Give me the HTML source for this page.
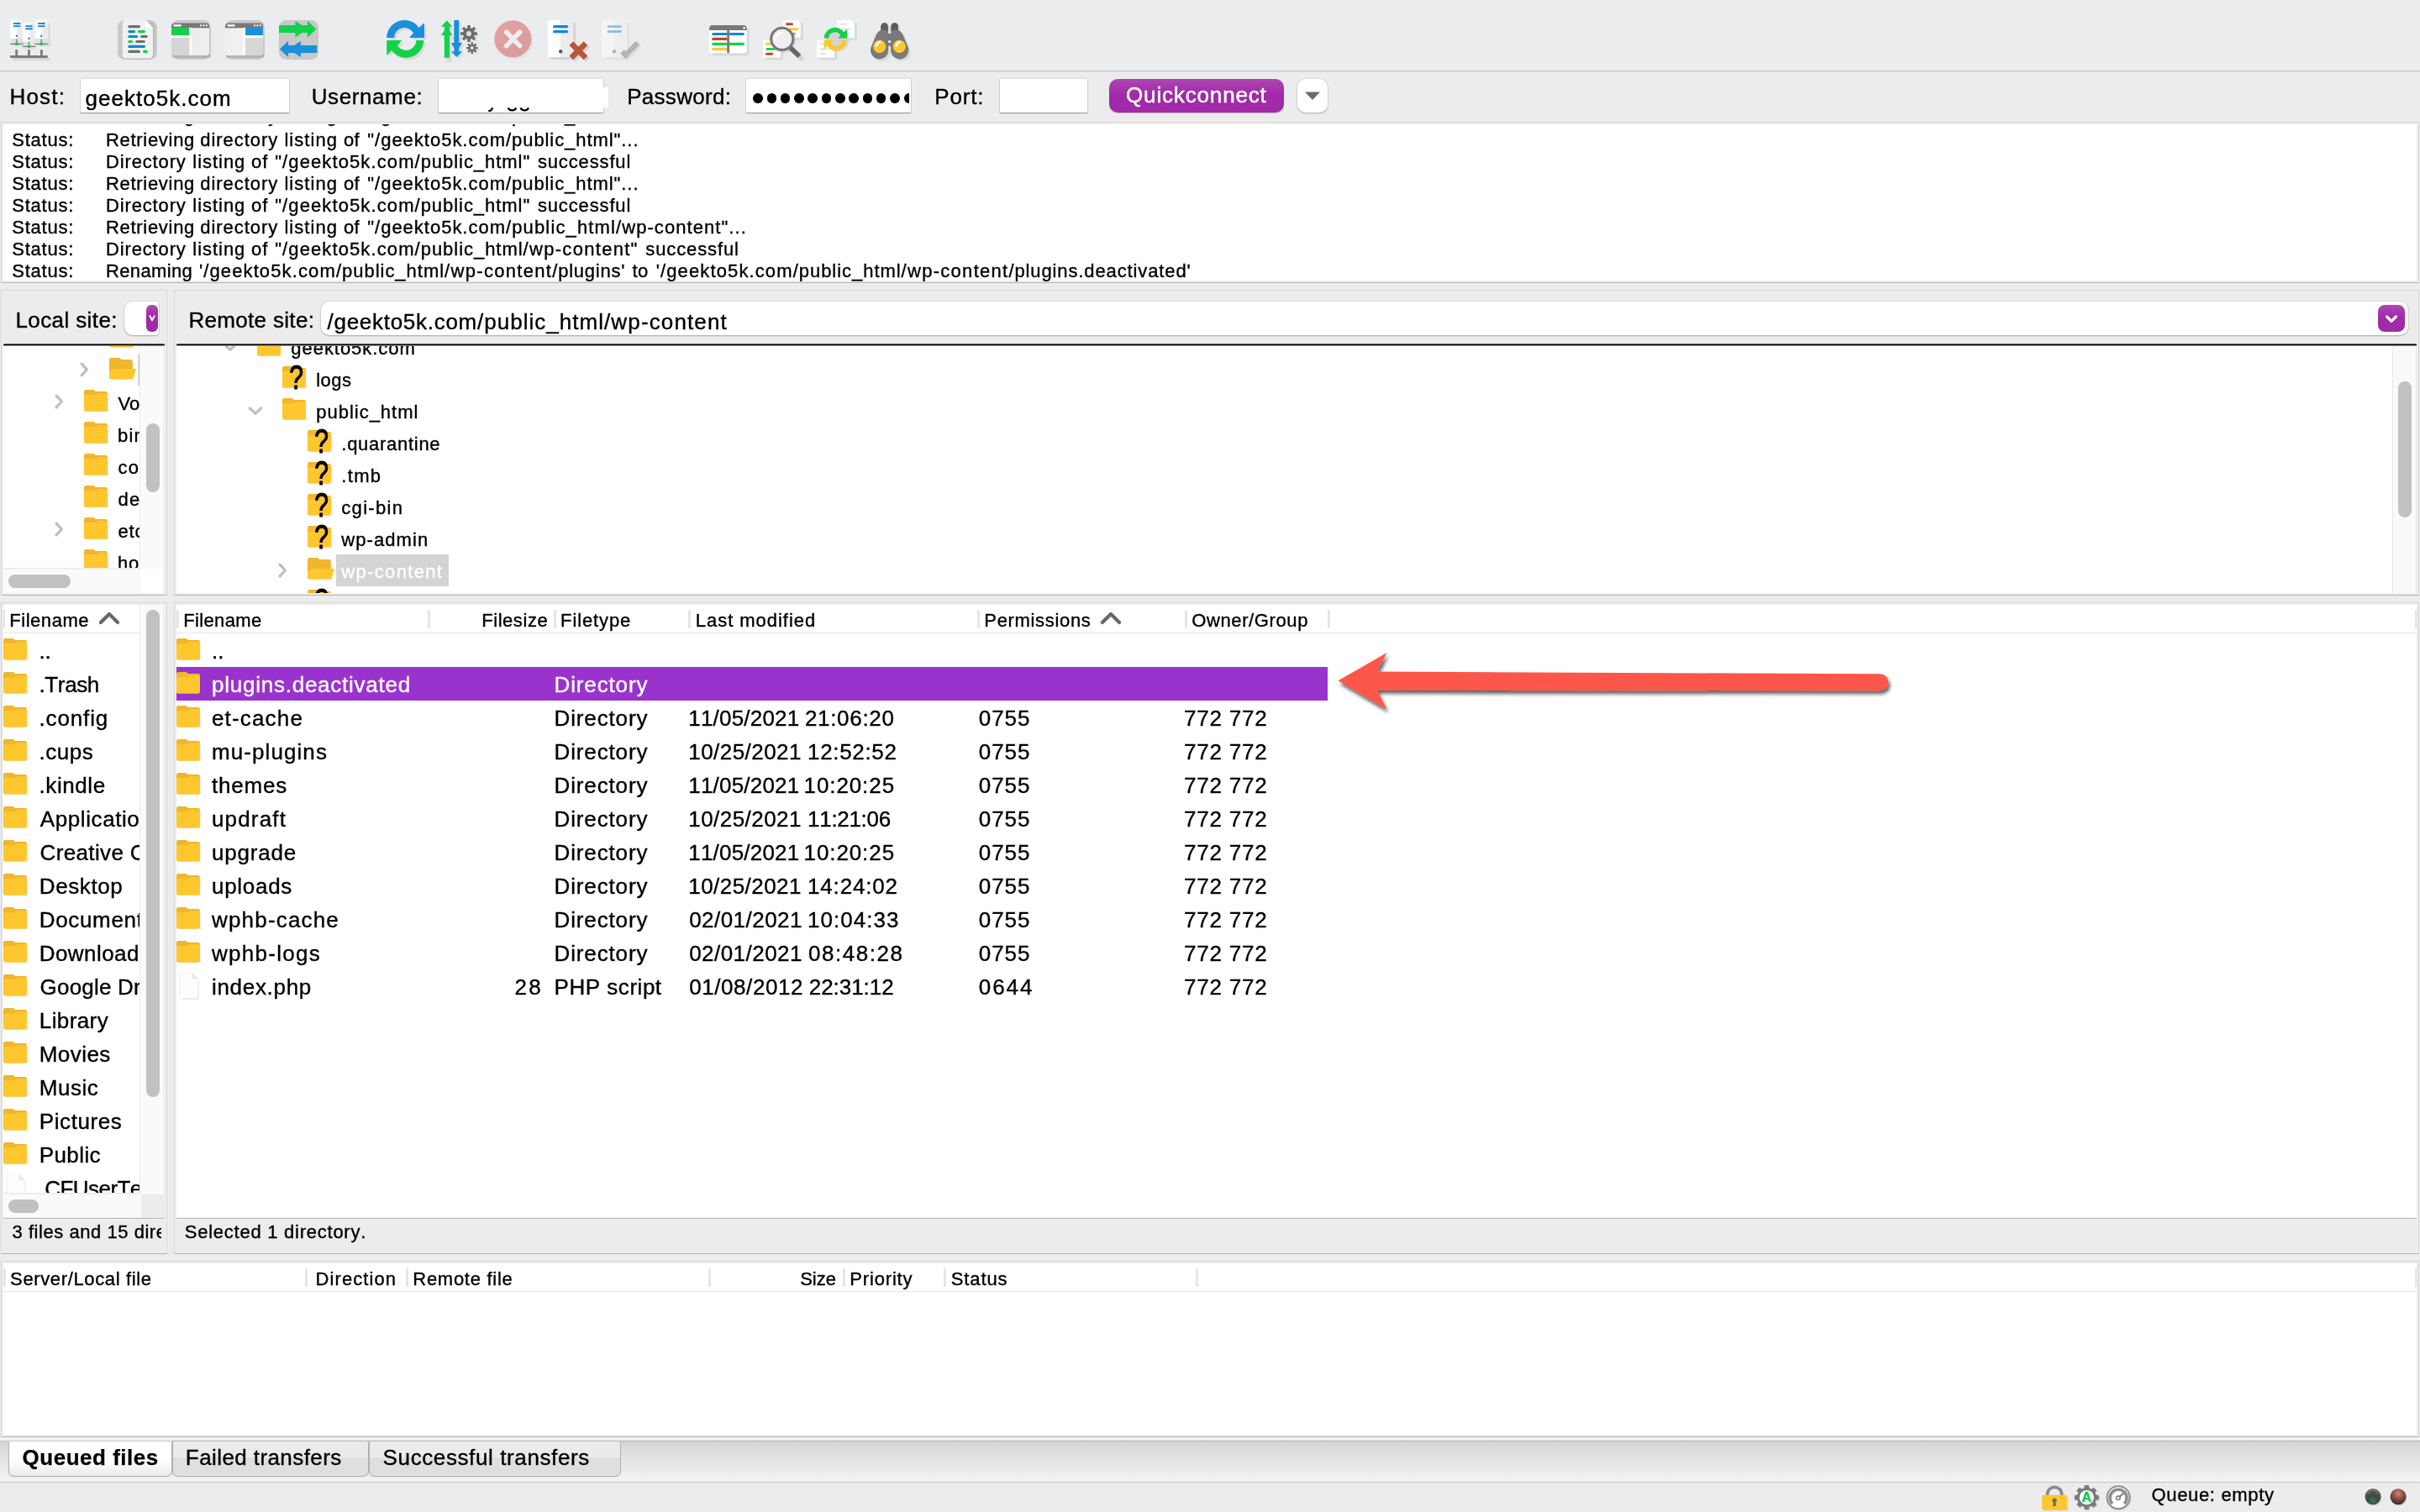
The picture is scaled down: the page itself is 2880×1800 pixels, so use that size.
<!DOCTYPE html>
<html lang="en"><head><meta charset="utf-8"><title>FileZilla</title>
<style>
html,body{margin:0;padding:0;}
body{width:2880px;height:1800px;overflow:hidden;background:#ececec;position:relative;
 font-family:"Liberation Sans",sans-serif;font-kerning:none;-webkit-font-smoothing:antialiased;}
#app{will-change:transform;position:absolute;left:0;top:0;width:2880px;height:1800px;overflow:hidden;}
#app div,#app svg{position:absolute;box-sizing:border-box;}
.t{white-space:pre;-webkit-text-stroke:0.36px currentColor;}
</style></head><body><div id="app">
<div style="left:0px;top:0px;width:2880px;height:84px;background:#ebecee;"></div>
<div style="left:0px;top:84px;width:2880px;height:1px;background:#c6c6c6;"></div>
<div style="left:0px;top:85px;width:2880px;height:1px;background:#e2e2e2;"></div>
<svg style="left:0;top:0;" width="1100" height="84" viewBox="0 0 1100 84"><rect x="56.2" y="27.5" width="3.8" height="28" rx="1" fill="#dcdcdc" /><rect x="15.5" y="69" width="44.5" height="3.2" rx="0.5" fill="#d9d9d9" /><rect x="14" y="46" width="43" height="9" rx="0" fill="#e0e0e0" /><rect x="28" y="49" width="14" height="10" rx="0" fill="#e2e2e2" /><rect x="11.9" y="23.8" width="14.3" height="22.2" rx="1.2" fill="#ffffff" /><rect x="19.908" y="24.400000000000002" width="6.292000000000001" height="21.599999999999998" rx="0.8" fill="#ebebeb" /><rect x="42.1" y="23.8" width="14.3" height="22.2" rx="1.2" fill="#ffffff" /><rect x="50.108000000000004" y="24.400000000000002" width="6.292000000000001" height="21.599999999999998" rx="0.8" fill="#ebebeb" /><rect x="27.2" y="27.4" width="14.2" height="21.8" rx="1.2" fill="#ffffff" /><rect x="35.152" y="28.0" width="6.247999999999999" height="21.2" rx="0.8" fill="#ebebeb" /><rect x="15.8" y="27.1" width="8.4" height="1.9" rx="0.4" fill="#0f88d8" /><rect x="15.8" y="30.200000000000003" width="8.4" height="1.9" rx="0.4" fill="#0f88d8" /><rect x="45.1" y="27.1" width="8.4" height="1.9" rx="0.4" fill="#0f88d8" /><rect x="45.1" y="30.200000000000003" width="8.4" height="1.9" rx="0.4" fill="#0f88d8" /><rect x="30.2" y="30.2" width="8.4" height="1.9" rx="0.4" fill="#0f88d8" /><rect x="30.2" y="33.3" width="8.4" height="1.9" rx="0.4" fill="#0f88d8" /><circle cx="19.9" cy="42.8" r="1.15" fill="#555" /><rect x="19.299999999999997" y="46.6" width="1.2" height="5.699999999999996" rx="0" fill="#777" /><rect x="12.099999999999998" y="51.65" width="15.6" height="1.3" rx="0.6" fill="#777" /><rect x="18.15" y="50.55" width="3.5" height="3.5" rx="0.9" fill="#12d24a" /><circle cx="49.2" cy="42.8" r="1.15" fill="#555" /><rect x="48.6" y="46.6" width="1.2" height="5.699999999999996" rx="0" fill="#777" /><rect x="41.400000000000006" y="51.65" width="15.6" height="1.3" rx="0.6" fill="#777" /><rect x="47.45" y="50.55" width="3.5" height="3.5" rx="0.9" fill="#12d24a" /><circle cx="34.5" cy="45.8" r="1.15" fill="#555" /><rect x="33.9" y="49.6" width="1.2" height="5.799999999999997" rx="0" fill="#777" /><rect x="26.7" y="54.75" width="15.6" height="1.3" rx="0.6" fill="#777" /><rect x="32.75" y="53.65" width="3.5" height="3.5" rx="0.9" fill="#12d24a" /><rect x="18.3" y="59.2" width="2.8" height="7.4" rx="0" fill="#7b7b7b" /><rect x="33.1" y="59.2" width="2.8" height="7.4" rx="0" fill="#7b7b7b" /><rect x="48.0" y="59.2" width="2.8" height="7.4" rx="0" fill="#7b7b7b" /><rect x="12" y="66" width="44.8" height="2.9" rx="0.4" fill="#7b7b7b" /><rect x="140" y="24" width="47" height="47" rx="8.5" fill="#c9c9c9" /><rect x="204" y="24" width="47" height="47" rx="8.5" fill="#c9c9c9" /><rect x="268" y="24" width="47" height="47" rx="8.5" fill="#c9c9c9" /><rect x="332" y="24" width="47" height="47" rx="8.5" fill="#c9c9c9" /><rect x="148" y="26" width="36" height="45" rx="6" fill="#bcbcbc" /><path d="M150 24h23.3l8.7 9.2v32a4.4 4.4 0 0 1-4.400 4.4H150a4.2 4.2 0 0 1-4.2-4.2V28.2A4.2 4.2 0 0 1 150 24z" fill="#f1f1f1" /><path d="M173.3 24l8.7 9.2h-7a1.7 1.7 0 0 1-1.700-1.7z" fill="#ffffff" /><rect x="152.3" y="30.10" width="14.70" height="3.2" rx="1.6" fill="#6f6f6f"/><rect x="152.3" y="36.00" width="8.80" height="3.2" rx="1.6" fill="#0f88d8"/><rect x="163.9" y="36.00" width="9.10" height="3.2" rx="1.6" fill="#13d14a"/><rect x="152.3" y="41.90" width="11.90" height="3.2" rx="1.6" fill="#0f88d8"/><rect x="167" y="41.90" width="8.80" height="3.2" rx="1.6" fill="#6f6f6f"/><rect x="152.3" y="47.90" width="5.80" height="3.2" rx="1.6" fill="#13d14a"/><rect x="161.1" y="47.90" width="11.70" height="3.2" rx="1.6" fill="#6f6f6f"/><rect x="152.3" y="53.80" width="20.70" height="3.2" rx="1.6" fill="#0f88d8"/><rect x="152.3" y="59.80" width="14.70" height="3.2" rx="1.6" fill="#6f6f6f"/><rect x="169.9" y="59.80" width="6.10" height="3.2" rx="1.6" fill="#13d14a"/><rect x="205" y="64" width="45.5" height="5" rx="3.5" fill="#b3b3b3" /><path d="M204 33v-1.6a4 4 0 0 1 4-4h37a4 4 0 0 1 4 4V33z" fill="#777" /><rect x="206.3" y="29.20" width="9.60" height="2.2" rx="1.1" fill="#fff"/><rect x="238.0" y="29.3" width="2.0" height="2.0" rx="0.5" fill="#fff" /><rect x="241.4" y="29.3" width="2.0" height="2.0" rx="0.5" fill="#fff" /><rect x="244.8" y="29.3" width="2.0" height="2.0" rx="0.5" fill="#fff" /><rect x="204" y="32.9" width="21.3" height="9.2" rx="0" fill="#13d14a" /><rect x="204" y="42.1" width="21.3" height="3.1" rx="0" fill="#fff" /><rect x="225.3" y="32.9" width="2.9" height="33" rx="0" fill="#fff" /><path d="M204 45.2h21.3v20.7h-17.8a3.5 3.5 0 0 1-3.5-3.500z" fill="#d5d5d5" /><path d="M228.2 34h20.800v28.4a3.5 3.5 0 0 1-3.500 3.5h-17.300z" fill="#eeeeee" /><rect x="269" y="64" width="45.5" height="5" rx="3.5" fill="#b3b3b3" /><path d="M268 33v-1.6a4 4 0 0 1 4-4h37a4 4 0 0 1 4 4V33z" fill="#777" /><rect x="270.3" y="29.20" width="9.60" height="2.2" rx="1.1" fill="#fff"/><rect x="302.0" y="29.3" width="2.0" height="2.0" rx="0.5" fill="#fff" /><rect x="305.4" y="29.3" width="2.0" height="2.0" rx="0.5" fill="#fff" /><rect x="308.8" y="29.3" width="2.0" height="2.0" rx="0.5" fill="#fff" /><path d="M268 34h21v31.9h-17.500a3.5 3.5 0 0 1-3.500-3.500z" fill="#f0f0f0" /><rect x="289" y="32.9" width="3.1" height="33" rx="0" fill="#fff" /><rect x="292.1" y="32.9" width="20.8" height="9.2" rx="0" fill="#1990dc" /><rect x="292.1" y="42.1" width="20.8" height="3.1" rx="0" fill="#fff" /><path d="M292.1 45.2h20.900v17.2a3.5 3.5 0 0 1-3.500 3.5h-17.400z" fill="#d7d7d7" /><path d="M332 30h19.5v-5.3l8 5.3h6.500v-5.3l10.400 10-10.400 9.800v-5.500h-6.500l-8 5.500v-5.500H332z" fill="#13d14a" /><path d="M377.2 54h-19.300v-5.2l-7.6 5.2h-7.200v-5.2l-10.200 9.700 10.200 9.600v-5h7.200l7.600 5v-5h19.300z" fill="#1990dc" /><g transform="translate(460 24) scale(1)" opacity=".9"><path d="M0.20 20.9A21.1 21.1 0 0 1 38.50 8.88L45 3.2V20.9H27L32.00 15.24A12.2 12.2 0 0 0 9.10 20.9z" fill="#dadada" transform="translate(2.6 2.6)"/><path d="M0.2 24.1H18L13.00 30.39A12.2 12.2 0 0 0 35.39 24.1H44.30A21.1 21.1 0 0 1 6.10 36.06L0.2 42.2z" fill="#dadada" transform="translate(2.6 2.6)"/></g><g transform="translate(460 24) scale(1)"><path d="M0.20 20.9A21.1 21.1 0 0 1 38.50 8.88L45 3.2V20.9H27L32.00 15.24A12.2 12.2 0 0 0 9.10 20.9z" fill="#1990dc"/><path d="M0.2 24.1H18L13.00 30.39A12.2 12.2 0 0 0 35.39 24.1H44.30A21.1 21.1 0 0 1 6.10 36.06L0.2 42.2z" fill="#13d14a"/></g><path d="M531.8 26.800l6.600 7.500h-3.500v4.800l3.500 5.500h-3.500v26.800h-6.200v-26.800h-3.700l3.700-5.500v-4.800h-3.700z" fill="#dadada" transform="translate(2.6 2.4)"/><path d="M540.3 24h5.900v27.100h4.100l-4.100 6v4.200h4.100l-7 6.700-6.500-6.700h3.500v-4.200l-3.500-6h3.500z" fill="#dadada" transform="translate(2.6 2.4)"/><path d="M531.8 24.200l6.600 7.500h-3.400v4.800l3.400 5.500h-3.400v26.800h-6.200v-26.800h-3.800l3.800-5.500v-4.800h-3.800z" fill="#13d14a" /><path d="M540.3 24h5.900v27.100h4.100l-4.100 6v4.200h4.100l-7 6.700-6.500-6.700h3.500v-4.200l-3.500-6h3.500z" fill="#1990dc" /><path d="M558.25 31.95 L561.75 31.95 L561.63 35.19 L563.66 36.03 L565.87 33.65 L568.35 36.13 L565.97 38.34 L566.81 40.37 L570.05 40.25 L570.05 43.75 L566.81 43.63 L565.97 45.66 L568.35 47.87 L565.87 50.35 L563.66 47.97 L561.63 48.81 L561.75 52.05 L558.25 52.05 L558.37 48.81 L556.34 47.97 L554.13 50.35 L551.65 47.87 L554.03 45.66 L553.19 43.63 L549.95 43.75 L549.95 40.25 L553.19 40.37 L554.03 38.34 L551.65 36.13 L554.13 33.65 L556.34 36.03 L558.37 35.19z" fill="#e0e0e0"/><circle cx="560.0" cy="42.0" r="3.0" fill="#e0e0e0" /><path d="M562.41 52.20 L564.79 52.20 L564.67 54.53 L566.00 55.08 L567.57 53.35 L569.25 55.03 L567.52 56.60 L568.07 57.93 L570.40 57.81 L570.40 60.19 L568.07 60.07 L567.52 61.40 L569.25 62.97 L567.57 64.65 L566.00 62.92 L564.67 63.47 L564.79 65.80 L562.41 65.80 L562.53 63.47 L561.20 62.92 L559.63 64.65 L557.95 62.97 L559.68 61.40 L559.13 60.07 L556.80 60.19 L556.80 57.81 L559.13 57.93 L559.68 56.60 L557.95 55.03 L559.63 53.35 L561.20 55.08 L562.53 54.53z" fill="#e0e0e0"/><circle cx="563.6" cy="59.0" r="2.0" fill="#e0e0e0" /><path d="M556.25 29.95 L559.75 29.95 L559.63 33.19 L561.66 34.03 L563.87 31.65 L566.35 34.13 L563.97 36.34 L564.81 38.37 L568.05 38.25 L568.05 41.75 L564.81 41.63 L563.97 43.66 L566.35 45.87 L563.87 48.35 L561.66 45.97 L559.63 46.81 L559.75 50.05 L556.25 50.05 L556.37 46.81 L554.34 45.97 L552.13 48.35 L549.65 45.87 L552.03 43.66 L551.19 41.63 L547.95 41.75 L547.95 38.25 L551.19 38.37 L552.03 36.34 L549.65 34.13 L552.13 31.65 L554.34 34.03 L556.37 33.19z" fill="#6c6c6c"/><circle cx="558.0" cy="40.0" r="3.1" fill="#dcdcdc" /><path d="M560.61 50.30 L562.99 50.30 L562.87 52.63 L564.20 53.18 L565.77 51.45 L567.45 53.13 L565.72 54.70 L566.27 56.03 L568.60 55.91 L568.60 58.29 L566.27 58.17 L565.72 59.50 L567.45 61.07 L565.77 62.75 L564.20 61.02 L562.87 61.57 L562.99 63.90 L560.61 63.90 L560.73 61.57 L559.40 61.02 L557.83 62.75 L556.15 61.07 L557.88 59.50 L557.33 58.17 L555.00 58.29 L555.00 55.91 L557.33 56.03 L557.88 54.70 L556.15 53.13 L557.83 51.45 L559.40 53.18 L560.73 52.63z" fill="#6c6c6c"/><circle cx="561.8" cy="57.1" r="2.1" fill="#dcdcdc" /><circle cx="612.3" cy="48.5" r="22" fill="#e1e1e3" /><defs><linearGradient id="cg" x1="0" y1="0" x2="1" y2="1"><stop offset="0" stop-color="#e6a2a3"/><stop offset=".5" stop-color="#e09c9e"/><stop offset="1" stop-color="#d19ea0"/></linearGradient></defs><circle cx="610.3" cy="46.3" r="22" fill="url(#cg)" /><path d="M602.600 38.200L618.600 54.600M618.600 38.200L602.600 54.600" stroke="#eeeeee" stroke-width="5.6" stroke-linecap="round" fill="none"/><rect x="655" y="27" width="30.2" height="44" rx="2" fill="#d6d6d6" /><rect x="652.2" y="24" width="29.8" height="44" rx="2" fill="#ffffff" /><path d="M667 24h13a2 2 0 0 1 2 2v40a2 2 0 0 1-2 2h-13z" fill="#ececec" /><rect x="658" y="30.05" width="18.20" height="3.3" rx="1.65" fill="#0f88d8"/><rect x="658" y="36.05" width="18.20" height="3.3" rx="1.65" fill="#0f88d8"/><circle cx="667.2" cy="61.3" r="2.2" fill="#5a5a5a" /><path d="M682.200 54L699.500 71.200M699.500 54L682.200 71.200" stroke="#d4d4d4" stroke-width="6.4" fill="none"/><path d="M679.800 51.700L697 68.900M697 51.700L679.800 68.900" stroke="#b8553b" stroke-width="6.6" fill="none"/><rect x="719" y="27" width="30" height="44" rx="2" fill="#e3e3e4" /><rect x="716" y="24" width="29.8" height="44" rx="2" fill="#f5f5f5" /><path d="M731 24h13a2 2 0 0 1 2 2v40a2 2 0 0 1-2 2h-13z" fill="#eeeeef" /><rect x="722.7" y="30.20" width="17.30" height="2.8" rx="1.4" fill="#8fbfe3"/><rect x="722.7" y="36.10" width="17.30" height="2.8" rx="1.4" fill="#8fbfe3"/><circle cx="731" cy="61.3" r="2.2" fill="#b6b6b6" /><path d="M742.800 63.700L746.900 68L761.200 53.200" stroke="#dedede" stroke-width="6" fill="none"/><path d="M740.600 61.500L744.600 65.700L758.800 51" stroke="#b4b4b4" stroke-width="6.2" fill="none"/><rect x="847" y="33" width="44.6" height="33.3" rx="4" fill="#d9d9d9" /><rect x="844" y="30" width="44.8" height="33.3" rx="4" fill="#ffffff" /><path d="M844 35.900V34a4 4 0 0 1 4-4h36.800a4 4 0 0 1 4 4v1.900z" fill="#797979" /><circle cx="885.6" cy="33.2" r="1.25" fill="#fff" /><rect x="847.2" y="38.90" width="38.80" height="3.2" rx="1.6" fill="#0f88d8"/><rect x="847.2" y="44.80" width="18.80" height="3.2" rx="1.6" fill="#c5452f"/><rect x="847.2" y="50.80" width="38.80" height="3.2" rx="1.6" fill="#13d14a"/><rect x="847.2" y="56.80" width="18.80" height="3.2" rx="1.6" fill="#fec72e"/><rect x="865.2" y="35.8" width="2.9" height="27.3" rx="0" fill="#7b7b7b" /><rect x="934.6" y="26.8" width="21.400000000000002" height="21.4" rx="1.5" fill="#dadada" /><path d="M932 24h17.6l3.200 3.200v17.8h-20.8z" fill="#ffffff" /><rect x="935" y="27.35" width="9.00" height="2.9" rx="1.45" fill="#b8482f"/><rect x="938" y="33.25" width="12.20" height="2.9" rx="1.45" fill="#fec72e"/><rect x="940" y="39.05" width="6.70" height="2.9" rx="1.45" fill="#13d14a"/><rect x="910.8000000000001" y="50.9" width="21.400000000000002" height="20.7" rx="1.5" fill="#dadada" /><path d="M908.2 48.1h17.6l3.200 3.200v17.1h-20.8z" fill="#ffffff" /><rect x="911" y="50.85" width="9.00" height="2.9" rx="1.45" fill="#fec72e"/><rect x="911.6" y="56.95" width="12.40" height="2.9" rx="1.45" fill="#13d14a"/><rect x="911" y="62.85" width="9.20" height="2.9" rx="1.45" fill="#c5452f"/><path d="M943.500 59.600L953.800 69.400" stroke="#d6d6d6" stroke-width="5.600" stroke-linecap="butt" fill="none" transform="translate(1.8 2.2)"/><circle cx="932.8" cy="48.6" r="14.6" fill="#d4d4d4" opacity=".7"/><circle cx="930.8" cy="46.3" r="13.1" fill="#efefef" /><path d="M922.700 47.500a8.300 8.300 0 0 1 7.700-8.400" stroke="#fff" stroke-width="2.200" stroke-linecap="round" fill="none"/><circle cx="930.800" cy="46.300" r="13.100" fill="none" stroke="#787878" stroke-width="3.100"/><path d="M940.700 56.800L951.400 67" stroke="#656565" stroke-width="5.800" stroke-linecap="butt" fill="none"/><rect x="998.6" y="26.8" width="21.400000000000002" height="21.4" rx="1.5" fill="#dadada" /><path d="M996 24h17.6l3.200 3.200v17.8h-20.8z" fill="#ffffff" /><rect x="999.3" y="27.50" width="8.20" height="2.6" rx="1.3" fill="#e6e6e6"/><rect x="1001.5" y="33.40" width="11.50" height="2.6" rx="1.3" fill="#e6e6e6"/><rect x="1003" y="39.20" width="8.00" height="2.6" rx="1.3" fill="#e6e6e6"/><rect x="974.8000000000001" y="50.9" width="21.400000000000002" height="20.7" rx="1.5" fill="#dadada" /><path d="M972.2 48.1h17.6l3.200 3.200v17.1h-20.8z" fill="#ffffff" /><rect x="975.5" y="51.00" width="8.50" height="2.6" rx="1.3" fill="#e6e6e6"/><rect x="975.5" y="57.00" width="11.50" height="2.6" rx="1.3" fill="#e6e6e6"/><rect x="975.5" y="63.00" width="8.20" height="2.6" rx="1.3" fill="#e6e6e6"/><circle cx="996.6" cy="48.2" r="13.6" fill="#d2d2d2" opacity=".75"/><circle cx="994.6" cy="46.3" r="9" fill="#d3d3d3" /><g transform="translate(980.6 32.8) scale(0.612)"><path d="M0.20 20.9A21.1 21.1 0 0 1 38.50 8.88L45 3.2V20.9H27L32.00 15.24A12.2 12.2 0 0 0 9.10 20.9z" fill="#13d14a"/><path d="M0.2 24.1H18L13.00 30.39A12.2 12.2 0 0 0 35.39 24.1H44.30A21.1 21.1 0 0 1 6.10 36.06L0.2 42.2z" fill="#fec72e"/></g><path d="M1048.300 31.500a4.300 4.300 0 0 1 8.600 0V40h3.500v-8.500a4.300 4.300 0 0 1 8.600 0v4.500c3.500 1.500 5.200 4 6.400 7.200l5 12.300a10.600 10.600 0 1 1-20.300 4.400v-5.200h-2.900v5.200a10.600 10.600 0 1 1-20.300-4.400l5-12.300c1.200-3.200 2.900-5.700 6.400-7.200z" fill="#dcdcdc" transform="translate(2.8 2.6)"/><path d="M1048.300 31.500a4.300 4.300 0 0 1 8.600 0V40h3.500v-8.500a4.300 4.300 0 0 1 8.600 0v4.500c3.500 1.500 5.200 4 6.400 7.200l5 12.300a10.600 10.600 0 1 1-20.300 4.400v-5.200h-2.900v5.200a10.600 10.600 0 1 1-20.300-4.400l5-12.300c1.200-3.200 2.900-5.700 6.400-7.200z" fill="#7a7a7a" /><path d="M1048.300 31.500a4.300 4.300 0 0 1 8.600 0v5.500c-2.600-1.700-5.800-2-8.600-1z" fill="#5d5d5d" /><path d="M1060.400 31.500a4.300 4.300 0 0 1 8.600 0v4.500c-2.800-1-6-.7-8.600 1z" fill="#5d5d5d" /><circle cx="1058.6" cy="49.5" r="1.55" fill="#fff" /><circle cx="1046.7" cy="55.4" r="7.6" fill="#fec72e" /><path d="M1043.1000000000001 54.8a4.600 4.600 0 0 1 4.300-4.500" stroke="#fff" stroke-width="2.500" stroke-linecap="round" fill="none"/><circle cx="1070.3" cy="55.4" r="7.6" fill="#fec72e" /><path d="M1066.7 54.8a4.600 4.600 0 0 1 4.300-4.500" stroke="#fff" stroke-width="2.500" stroke-linecap="round" fill="none"/></svg>
<div class="t" style="left:11.47px;top:102px;font-size:26px;line-height:26px;color:#000;letter-spacing:1.206px;">Host:</div>
<div style="left:96px;top:94px;width:248px;height:40px;background:#fff;box-shadow:0 0 0 1px rgba(0,0,0,.07),0 1px 1px rgba(0,0,0,.28);"></div>
<div class="t" style="left:101.41px;top:104px;font-size:26px;line-height:26px;color:#000;letter-spacing:1.040px;">geekto5k.com</div>
<div class="t" style="left:370.69px;top:102px;font-size:26px;line-height:26px;color:#000;letter-spacing:0.603px;">Username:</div>
<div style="left:522px;top:94px;width:196px;height:40px;background:#fff;box-shadow:0 0 0 1px rgba(0,0,0,.07),0 1px 1px rgba(0,0,0,.28);"></div>
<div class="t" style="left:746.17px;top:102px;font-size:26px;line-height:26px;color:#000;letter-spacing:0.303px;">Password:</div>
<div style="left:888px;top:94px;width:196px;height:40px;background:#fff;box-shadow:0 0 0 1px rgba(0,0,0,.07),0 1px 1px rgba(0,0,0,.28);"></div>
<div class="t" style="left:1112.27px;top:102px;font-size:26px;line-height:26px;color:#000;letter-spacing:0.800px;">Port:</div>
<div style="left:1190px;top:94px;width:104px;height:40px;background:#fff;box-shadow:0 0 0 1px rgba(0,0,0,.07),0 1px 1px rgba(0,0,0,.28);"></div>
<div style="left:896.2px;top:111.2px;width:11.6px;height:11.6px;background:#000;border-radius:5.8px;"></div>
<div style="left:912.5px;top:111.2px;width:11.6px;height:11.6px;background:#000;border-radius:5.8px;"></div>
<div style="left:928.8px;top:111.2px;width:11.6px;height:11.6px;background:#000;border-radius:5.8px;"></div>
<div style="left:945.1px;top:111.2px;width:11.6px;height:11.6px;background:#000;border-radius:5.8px;"></div>
<div style="left:961.4px;top:111.2px;width:11.6px;height:11.6px;background:#000;border-radius:5.8px;"></div>
<div style="left:977.7px;top:111.2px;width:11.6px;height:11.6px;background:#000;border-radius:5.8px;"></div>
<div style="left:994.0px;top:111.2px;width:11.6px;height:11.6px;background:#000;border-radius:5.8px;"></div>
<div style="left:1010.3px;top:111.2px;width:11.6px;height:11.6px;background:#000;border-radius:5.8px;"></div>
<div style="left:1026.6px;top:111.2px;width:11.6px;height:11.6px;background:#000;border-radius:5.8px;"></div>
<div style="left:1042.9px;top:111.2px;width:11.6px;height:11.6px;background:#000;border-radius:5.8px;"></div>
<div style="left:1059.2px;top:111.2px;width:11.6px;height:11.6px;background:#000;border-radius:5.8px;"></div>
<div style="left:1075.5px;top:111.2px;width:6.5px;height:11.6px;background:#000;border-radius:5.8px 0 0 5.8px;"></div>
<svg style="left:570px;top:126px;clip-path:inset(2px 0 0 0);" width="70" height="8" viewBox="0 0 70 8"><path d="M16.200 2.200l-1.500 2.600c-.700 1-1.700 1.300-3.400 1" fill="none" stroke="#000" stroke-width="2.300"/><path d="M34.800 2.400c.800 2.200 2.600 3 4.700 3s3.900-.800 4.600-3" fill="none" stroke="#000" stroke-width="2.300"/><path d="M49.600 2.400c.800 2.200 2.600 3 4.700 3s3.900-.800 4.600-3" fill="none" stroke="#000" stroke-width="2.300"/></svg>
<div style="left:718px;top:104px;width:6px;height:24px;background:#fff;"></div>
<div style="left:1320px;top:94px;width:208px;height:40px;background:linear-gradient(#ad48b3,#a533ad 30%,#a02aa8 50%);border-radius:10px;box-shadow:0 1px 1px rgba(0,0,0,.18);"></div>
<div class="t" style="left:1340.07px;top:100px;font-size:26px;line-height:26px;color:#fff;letter-spacing:0.836px;-webkit-text-stroke:0.5px #fff;">Quickconnect</div>
<div style="left:1544px;top:94px;width:36px;height:40px;background:#fff;border-radius:10px;box-shadow:0 0 0 1px rgba(0,0,0,.06),0 1px 2px rgba(0,0,0,.25);"></div>
<svg style="left:1544px;top:94px;" width="36" height="40" viewBox="0 0 36 40"><path d="M9 15.5h18l-9 9.5z" fill="#6b6b6b"/></svg>
<div style="left:1px;top:145px;width:2878px;height:192px;background:#eeeeee;border:1px solid #d6d6d6;border-bottom-color:#b3b3b3;"></div>
<div style="left:4px;top:148px;width:2872px;height:186px;background:#fff;"></div>
<div style="left:4px;top:148px;width:2872px;height:187px;overflow:hidden;">
<div class="t" style="left:10.20px;top:-21px;font-size:22px;line-height:22px;color:#000;letter-spacing:0.788px;">Status: </div>
<div class="t" style="left:122.00px;top:-21px;font-size:22px;line-height:22px;color:#000;letter-spacing:0.698px;">Retrieving </div>
<div class="t" style="left:234.28px;top:-21px;font-size:22px;line-height:22px;color:#000;letter-spacing:0.964px;">directory </div>
<div class="t" style="left:334.42px;top:-21px;font-size:22px;line-height:22px;color:#000;letter-spacing:1.042px;">listing </div>
<div class="t" style="left:404.88px;top:-21px;font-size:22px;line-height:22px;color:#000;letter-spacing:0.444px;">of </div>
<div class="t" style="left:433.27px;top:-21px;font-size:22px;line-height:22px;color:#000;letter-spacing:0.989px;">"/geekto5k.com</div>
<div class="t" style="left:598.00px;top:-21px;font-size:22px;line-height:22px;color:#000;letter-spacing:0.931px;">/public_html"...</div>
<div class="t" style="left:10.20px;top:8px;font-size:22px;line-height:22px;color:#000;letter-spacing:0.788px;">Status: </div>
<div class="t" style="left:122.00px;top:8px;font-size:22px;line-height:22px;color:#000;letter-spacing:0.698px;">Retrieving </div>
<div class="t" style="left:234.28px;top:8px;font-size:22px;line-height:22px;color:#000;letter-spacing:0.964px;">directory </div>
<div class="t" style="left:334.42px;top:8px;font-size:22px;line-height:22px;color:#000;letter-spacing:1.042px;">listing </div>
<div class="t" style="left:404.88px;top:8px;font-size:22px;line-height:22px;color:#000;letter-spacing:0.444px;">of </div>
<div class="t" style="left:433.27px;top:8px;font-size:22px;line-height:22px;color:#000;letter-spacing:0.989px;">"/geekto5k.com</div>
<div class="t" style="left:598.00px;top:8px;font-size:22px;line-height:22px;color:#000;letter-spacing:0.931px;">/public_html"...</div>
<div class="t" style="left:10.20px;top:34px;font-size:22px;line-height:22px;color:#000;letter-spacing:0.788px;">Status: </div>
<div class="t" style="left:122.00px;top:34px;font-size:22px;line-height:22px;color:#000;letter-spacing:0.855px;">Directory </div>
<div class="t" style="left:225.32px;top:34px;font-size:22px;line-height:22px;color:#000;letter-spacing:0.959px;">listing </div>
<div class="t" style="left:294.88px;top:34px;font-size:22px;line-height:22px;color:#000;letter-spacing:1.044px;">of </div>
<div class="t" style="left:323.17px;top:34px;font-size:22px;line-height:22px;color:#000;letter-spacing:1.111px;">"/geekto5k.com</div>
<div class="t" style="left:489.60px;top:34px;font-size:22px;line-height:22px;color:#000;letter-spacing:0.953px;">/public_html" </div>
<div class="t" style="left:635.89px;top:34px;font-size:22px;line-height:22px;color:#000;letter-spacing:0.864px;">successful</div>
<div class="t" style="left:10.20px;top:60px;font-size:22px;line-height:22px;color:#000;letter-spacing:0.788px;">Status: </div>
<div class="t" style="left:122.00px;top:60px;font-size:22px;line-height:22px;color:#000;letter-spacing:0.698px;">Retrieving </div>
<div class="t" style="left:234.28px;top:60px;font-size:22px;line-height:22px;color:#000;letter-spacing:0.964px;">directory </div>
<div class="t" style="left:334.42px;top:60px;font-size:22px;line-height:22px;color:#000;letter-spacing:1.042px;">listing </div>
<div class="t" style="left:404.88px;top:60px;font-size:22px;line-height:22px;color:#000;letter-spacing:0.444px;">of </div>
<div class="t" style="left:433.27px;top:60px;font-size:22px;line-height:22px;color:#000;letter-spacing:0.989px;">"/geekto5k.com</div>
<div class="t" style="left:598.00px;top:60px;font-size:22px;line-height:22px;color:#000;letter-spacing:0.931px;">/public_html"...</div>
<div class="t" style="left:10.20px;top:86px;font-size:22px;line-height:22px;color:#000;letter-spacing:0.788px;">Status: </div>
<div class="t" style="left:122.00px;top:86px;font-size:22px;line-height:22px;color:#000;letter-spacing:0.855px;">Directory </div>
<div class="t" style="left:225.32px;top:86px;font-size:22px;line-height:22px;color:#000;letter-spacing:0.959px;">listing </div>
<div class="t" style="left:294.88px;top:86px;font-size:22px;line-height:22px;color:#000;letter-spacing:1.044px;">of </div>
<div class="t" style="left:323.17px;top:86px;font-size:22px;line-height:22px;color:#000;letter-spacing:1.111px;">"/geekto5k.com</div>
<div class="t" style="left:489.60px;top:86px;font-size:22px;line-height:22px;color:#000;letter-spacing:0.953px;">/public_html" </div>
<div class="t" style="left:635.89px;top:86px;font-size:22px;line-height:22px;color:#000;letter-spacing:0.864px;">successful</div>
<div class="t" style="left:10.20px;top:112px;font-size:22px;line-height:22px;color:#000;letter-spacing:0.788px;">Status: </div>
<div class="t" style="left:122.00px;top:112px;font-size:22px;line-height:22px;color:#000;letter-spacing:0.698px;">Retrieving </div>
<div class="t" style="left:234.28px;top:112px;font-size:22px;line-height:22px;color:#000;letter-spacing:0.964px;">directory </div>
<div class="t" style="left:334.42px;top:112px;font-size:22px;line-height:22px;color:#000;letter-spacing:1.042px;">listing </div>
<div class="t" style="left:404.88px;top:112px;font-size:22px;line-height:22px;color:#000;letter-spacing:0.444px;">of </div>
<div class="t" style="left:433.27px;top:112px;font-size:22px;line-height:22px;color:#000;letter-spacing:0.989px;">"/geekto5k.com</div>
<div class="t" style="left:598.00px;top:112px;font-size:22px;line-height:22px;color:#000;letter-spacing:1.134px;">/public_html</div>
<div class="t" style="left:729.00px;top:112px;font-size:22px;line-height:22px;color:#000;letter-spacing:1.067px;">/wp-content"...</div>
<div class="t" style="left:10.20px;top:138px;font-size:22px;line-height:22px;color:#000;letter-spacing:0.788px;">Status: </div>
<div class="t" style="left:122.00px;top:138px;font-size:22px;line-height:22px;color:#000;letter-spacing:0.855px;">Directory </div>
<div class="t" style="left:225.32px;top:138px;font-size:22px;line-height:22px;color:#000;letter-spacing:0.959px;">listing </div>
<div class="t" style="left:294.88px;top:138px;font-size:22px;line-height:22px;color:#000;letter-spacing:1.044px;">of </div>
<div class="t" style="left:323.17px;top:138px;font-size:22px;line-height:22px;color:#000;letter-spacing:1.111px;">"/geekto5k.com</div>
<div class="t" style="left:489.60px;top:138px;font-size:22px;line-height:22px;color:#000;letter-spacing:0.967px;">/public_html</div>
<div class="t" style="left:618.60px;top:138px;font-size:22px;line-height:22px;color:#000;letter-spacing:1.300px;">/wp-content" </div>
<div class="t" style="left:764.29px;top:138px;font-size:22px;line-height:22px;color:#000;letter-spacing:0.886px;">successful</div>
<div class="t" style="left:10.20px;top:164px;font-size:22px;line-height:22px;color:#000;letter-spacing:0.788px;">Status: </div>
<div class="t" style="left:122.00px;top:164px;font-size:22px;line-height:22px;color:#000;letter-spacing:0.349px;">Renaming </div>
<div class="t" style="left:232.88px;top:164px;font-size:22px;line-height:22px;color:#000;letter-spacing:1.124px;">'/geekto5k.com</div>
<div class="t" style="left:395.90px;top:164px;font-size:22px;line-height:22px;color:#000;letter-spacing:0.984px;">/public_html</div>
<div class="t" style="left:525.10px;top:164px;font-size:22px;line-height:22px;color:#000;letter-spacing:1.316px;">/wp-content</div>
<div class="t" style="left:653.30px;top:164px;font-size:22px;line-height:22px;color:#000;letter-spacing:0.760px;">/plugins' </div>
<div class="t" style="left:748.47px;top:164px;font-size:22px;line-height:22px;color:#000;letter-spacing:0.409px;">to </div>
<div class="t" style="left:776.68px;top:164px;font-size:22px;line-height:22px;color:#000;letter-spacing:1.124px;">'/geekto5k.com</div>
<div class="t" style="left:939.70px;top:164px;font-size:22px;line-height:22px;color:#000;letter-spacing:0.959px;">/public_html</div>
<div class="t" style="left:1068.60px;top:164px;font-size:22px;line-height:22px;color:#000;letter-spacing:1.288px;">/wp-content</div>
<div class="t" style="left:1196.50px;top:164px;font-size:22px;line-height:22px;color:#000;letter-spacing:0.877px;">/plugins.deactivated'</div>
</div>
<div style="left:1px;top:345px;width:198px;height:364px;background:#eeeeee;border:1px solid #d6d6d6;border-bottom-color:#b3b3b3;"></div>
<div style="left:4px;top:348px;width:192px;height:358px;background:#ececec;"></div>
<div style="left:207px;top:345px;width:2672px;height:364px;background:#eeeeee;border:1px solid #d6d6d6;border-bottom-color:#b3b3b3;"></div>
<div style="left:210px;top:348px;width:2666px;height:358px;background:#ececec;"></div>
<div class="t" style="left:18.47px;top:368px;font-size:26px;line-height:26px;color:#000;letter-spacing:0.394px;">Local site:</div>
<div class="t" style="left:224.47px;top:368px;font-size:26px;line-height:26px;color:#000;letter-spacing:0.315px;">Remote site:</div>
<div style="left:148px;top:359px;width:41px;height:40px;background:#fff;border-radius:10px 4px 4px 10px;box-shadow:0 0 0 1px rgba(0,0,0,.05),0 1px 2px rgba(0,0,0,.25);"></div>
<div style="left:174px;top:363px;width:14px;height:32px;background:linear-gradient(#ad48b3,#a533ad 30%,#a02aa8 50%);border-radius:6px;"></div>
<svg style="left:174px;top:363px;" width="14" height="32" viewBox="0 0 14 32"><path d="M4.4 13.200l2.700 5 2.700-5" fill="none" stroke="#fff" stroke-width="1.900" stroke-linecap="round" stroke-linejoin="round"/></svg>
<div style="left:382px;top:359px;width:2484px;height:40px;background:#fff;border-radius:10px;box-shadow:0 0 0 1px rgba(0,0,0,.05),0 1px 2px rgba(0,0,0,.25);"></div>
<div style="left:2830px;top:363px;width:32px;height:32px;background:linear-gradient(#ad48b3,#a533ad 30%,#a02aa8 50%);border-radius:8px;"></div>
<svg style="left:2830px;top:363px;" width="32" height="32" viewBox="0 0 32 32"><path d="M10.600 14l5.400 5.300 5.400-5.300" fill="none" stroke="#fff" stroke-width="3.200" stroke-linecap="round" stroke-linejoin="round"/></svg>
<div class="t" style="left:389.50px;top:370px;font-size:26px;line-height:26px;color:#000;letter-spacing:0.724px;">/geekto5k.com</div>
<div class="t" style="left:568.00px;top:370px;font-size:26px;line-height:26px;color:#000;letter-spacing:1.022px;">/public_html</div>
<div class="t" style="left:719.00px;top:370px;font-size:26px;line-height:26px;color:#000;letter-spacing:1.139px;">/wp-content</div>
<div style="left:4px;top:409px;width:192px;height:3px;background:linear-gradient(rgba(0,0,0,.55) 0 33.3%,#000 33.3% 66.6%,rgba(0,0,0,.4) 66.6%);border-radius:1.5px;"></div>
<div style="left:210px;top:409px;width:2666px;height:3px;background:linear-gradient(rgba(0,0,0,.55) 0 33.3%,#000 33.3% 66.6%,rgba(0,0,0,.4) 66.6%);border-radius:1.5px;"></div>
<div style="left:4px;top:412px;width:162px;height:264px;background:#fff;overflow:hidden;">
<svg style="left:126px;top:-24px;" width="34" height="27" viewBox="0 0 34 27"><path d="M2.5 25.2h24a2 2 0 0 0 2-2V5.5l.9.8v17.4a2.6 2.6 0 0 1-2.6 2.6H3.3z" fill="#1a2a6a" fill-opacity=".11"/><path d="M0 2.2A2.2 2.2 0 0 1 2.2 0h9.2c.9 0 1.5.3 2 .9l1 1.2h11.2A2.2 2.2 0 0 1 27.8 4.3V16H0z" fill="#eeb72d"/><path d="M3.6 14.600c.3-1 .9-1.5 1.900-1.500h25.200c1 0 1.300.6 1 1.500l-3.100 9.400c-.3 1-.9 1.500-2 1.500H2.2A2.2 2.2 0 0 1 0 23.300v-1.600z" fill="#fec72e"/><path d="M0 15.500v7.500a2 2 0 0 0 1 1.700L3.600 15z" fill="#fec72e"/></svg>
<svg style="left:83.8px;top:16.29999999999999px;overflow:visible" width="24" height="24" viewBox="-12 -12 24 24"><path d="M-2.9 -6.8L3.4 0L-2.9 6.8" fill="none" stroke="#bebfbe" stroke-width="3.3" stroke-linecap="round" stroke-linejoin="round"/></svg>
<svg style="left:126px;top:14.199999999999989px;" width="34" height="27" viewBox="0 0 34 27"><path d="M2.5 25.2h24a2 2 0 0 0 2-2V5.5l.9.8v17.4a2.6 2.6 0 0 1-2.6 2.6H3.3z" fill="#1a2a6a" fill-opacity=".11"/><path d="M0 2.2A2.2 2.2 0 0 1 2.2 0h9.2c.9 0 1.5.3 2 .9l1 1.2h11.2A2.2 2.2 0 0 1 27.8 4.3V16H0z" fill="#eeb72d"/><path d="M3.6 14.600c.3-1 .9-1.5 1.900-1.500h25.200c1 0 1.300.6 1 1.500l-3.100 9.400c-.3 1-.9 1.500-2 1.500H2.2A2.2 2.2 0 0 1 0 23.300v-1.600z" fill="#fec72e"/><path d="M0 15.500v7.500a2 2 0 0 0 1 1.700L3.600 15z" fill="#fec72e"/></svg>
<div style="left:160px;top:10px;width:2px;height:37px;background:#d5d5d5;"></div>
<svg style="left:53.8px;top:54.29999999999998px;overflow:visible" width="24" height="24" viewBox="-12 -12 24 24"><path d="M-2.9 -6.8L3.4 0L-2.9 6.8" fill="none" stroke="#bebfbe" stroke-width="3.3" stroke-linecap="round" stroke-linejoin="round"/></svg>
<svg style="left:96px;top:52.19999999999999px;" width="30" height="27" viewBox="0 0 30 27"><path d="M2.5 25.2h24a2 2 0 0 0 2-2V5.5l.9.8v17.4a2.6 2.6 0 0 1-2.6 2.6H3.3z" fill="#1a2a6a" fill-opacity=".11"/><path d="M0 2.3A2.3 2.3 0 0 1 2.3 0h8.6c.9 0 1.5.3 2 .9l1.1 1.2h11.8A2.2 2.2 0 0 1 28 4.3V8H0z" fill="#eeb72d"/><path d="M0 6.2h14.2l1.6-1.9H28v19.2a2.3 2.3 0 0 1-2.3 2.3H2.3A2.3 2.3 0 0 1 0 23.5z" fill="#fec72e"/></svg>
<div class="t" style="left:136.40px;top:58px;font-size:22px;line-height:22px;color:#000;letter-spacing:-1.000px;">Volumes</div>
<svg style="left:96px;top:90.20000000000005px;" width="30" height="27" viewBox="0 0 30 27"><path d="M2.5 25.2h24a2 2 0 0 0 2-2V5.5l.9.8v17.4a2.6 2.6 0 0 1-2.6 2.6H3.3z" fill="#1a2a6a" fill-opacity=".11"/><path d="M0 2.3A2.3 2.3 0 0 1 2.3 0h8.6c.9 0 1.5.3 2 .9l1.1 1.2h11.8A2.2 2.2 0 0 1 28 4.3V8H0z" fill="#eeb72d"/><path d="M0 6.2h14.2l1.6-1.9H28v19.2a2.3 2.3 0 0 1-2.3 2.3H2.3A2.3 2.3 0 0 1 0 23.5z" fill="#fec72e"/></svg>
<div class="t" style="left:136.08px;top:96px;font-size:22px;line-height:22px;color:#000;letter-spacing:1.200px;">bin</div>
<svg style="left:96px;top:128.20000000000005px;" width="30" height="27" viewBox="0 0 30 27"><path d="M2.5 25.2h24a2 2 0 0 0 2-2V5.5l.9.8v17.4a2.6 2.6 0 0 1-2.6 2.6H3.3z" fill="#1a2a6a" fill-opacity=".11"/><path d="M0 2.3A2.3 2.3 0 0 1 2.3 0h8.6c.9 0 1.5.3 2 .9l1.1 1.2h11.8A2.2 2.2 0 0 1 28 4.3V8H0z" fill="#eeb72d"/><path d="M0 6.2h14.2l1.6-1.9H28v19.2a2.3 2.3 0 0 1-2.3 2.3H2.3A2.3 2.3 0 0 1 0 23.5z" fill="#fec72e"/></svg>
<div class="t" style="left:136.57px;top:134px;font-size:22px;line-height:22px;color:#000;letter-spacing:1.150px;">cores</div>
<svg style="left:96px;top:166.20000000000005px;" width="30" height="27" viewBox="0 0 30 27"><path d="M2.5 25.2h24a2 2 0 0 0 2-2V5.5l.9.8v17.4a2.6 2.6 0 0 1-2.6 2.6H3.3z" fill="#1a2a6a" fill-opacity=".11"/><path d="M0 2.3A2.3 2.3 0 0 1 2.3 0h8.6c.9 0 1.5.3 2 .9l1.1 1.2h11.8A2.2 2.2 0 0 1 28 4.3V8H0z" fill="#eeb72d"/><path d="M0 6.2h14.2l1.6-1.9H28v19.2a2.3 2.3 0 0 1-2.3 2.3H2.3A2.3 2.3 0 0 1 0 23.5z" fill="#fec72e"/></svg>
<div class="t" style="left:136.58px;top:172px;font-size:22px;line-height:22px;color:#000;letter-spacing:1.150px;">dev</div>
<svg style="left:53.8px;top:206.30000000000004px;overflow:visible" width="24" height="24" viewBox="-12 -12 24 24"><path d="M-2.9 -6.8L3.4 0L-2.9 6.8" fill="none" stroke="#bebfbe" stroke-width="3.3" stroke-linecap="round" stroke-linejoin="round"/></svg>
<svg style="left:96px;top:204.20000000000005px;" width="30" height="27" viewBox="0 0 30 27"><path d="M2.5 25.2h24a2 2 0 0 0 2-2V5.5l.9.8v17.4a2.6 2.6 0 0 1-2.6 2.6H3.3z" fill="#1a2a6a" fill-opacity=".11"/><path d="M0 2.3A2.3 2.3 0 0 1 2.3 0h8.6c.9 0 1.5.3 2 .9l1.1 1.2h11.8A2.2 2.2 0 0 1 28 4.3V8H0z" fill="#eeb72d"/><path d="M0 6.2h14.2l1.6-1.9H28v19.2a2.3 2.3 0 0 1-2.3 2.3H2.3A2.3 2.3 0 0 1 0 23.5z" fill="#fec72e"/></svg>
<div class="t" style="left:136.57px;top:210px;font-size:22px;line-height:22px;color:#000;letter-spacing:0.800px;">etc</div>
<svg style="left:96px;top:242.20000000000005px;" width="30" height="27" viewBox="0 0 30 27"><path d="M2.5 25.2h24a2 2 0 0 0 2-2V5.5l.9.8v17.4a2.6 2.6 0 0 1-2.6 2.6H3.3z" fill="#1a2a6a" fill-opacity=".11"/><path d="M0 2.3A2.3 2.3 0 0 1 2.3 0h8.6c.9 0 1.5.3 2 .9l1.1 1.2h11.8A2.2 2.2 0 0 1 28 4.3V8H0z" fill="#eeb72d"/><path d="M0 6.2h14.2l1.6-1.9H28v19.2a2.3 2.3 0 0 1-2.3 2.3H2.3A2.3 2.3 0 0 1 0 23.5z" fill="#fec72e"/></svg>
<div class="t" style="left:135.97px;top:248px;font-size:22px;line-height:22px;color:#000;letter-spacing:0.900px;">home</div>
</div>
<div style="left:166px;top:412px;width:28px;height:265px;background:#fafafa;border-left:1px solid #e9e9e9;"></div>
<div style="left:194px;top:412px;width:2px;height:294px;background:#f1f1f1;"></div>
<div style="left:174px;top:504px;width:16px;height:82px;background:#c1c1c1;border-radius:8px;"></div>
<div style="left:4px;top:677px;width:164px;height:29px;background:#fafafa;border-top:1px solid #f0f0f0;"></div>
<div style="left:168px;top:677px;width:26px;height:29px;background:#fff;"></div>
<div style="left:10px;top:684px;width:74px;height:16px;background:#c1c1c1;border-radius:8px;"></div>
<div style="left:210px;top:412px;width:2637px;height:294px;background:#fff;overflow:hidden;">
<svg style="left:52px;top:-10.600000000000012px;overflow:visible" width="24" height="24" viewBox="-12 -12 24 24"><path d="M-6.8 -3.1L0 3.3L6.8 -3.1" fill="none" stroke="#bebfbe" stroke-width="3.3" stroke-linecap="round" stroke-linejoin="round"/></svg>
<svg style="left:96px;top:-13.800000000000011px;" width="30" height="27" viewBox="0 0 30 27"><path d="M2.5 25.2h24a2 2 0 0 0 2-2V5.5l.9.8v17.4a2.6 2.6 0 0 1-2.6 2.6H3.3z" fill="#1a2a6a" fill-opacity=".11"/><path d="M0 2.3A2.3 2.3 0 0 1 2.3 0h8.6c.9 0 1.5.3 2 .9l1.1 1.2h11.8A2.2 2.2 0 0 1 28 4.3V8H0z" fill="#eeb72d"/><path d="M0 6.2h14.2l1.6-1.9H28v19.2a2.3 2.3 0 0 1-2.3 2.3H2.3A2.3 2.3 0 0 1 0 23.5z" fill="#fec72e"/></svg>
<div class="t" style="top:-8px;font-size:22px;line-height:22px;color:#000;letter-spacing:0.961px;left:136.30px;">geekto5k.com</div>
<svg style="left:126px;top:21.19999999999999px;overflow:visible" width="30" height="32" viewBox="0 -3 30 32"><path d="M2.5 25.2h24a2 2 0 0 0 2-2V5.5l.9.8v17.4a2.6 2.6 0 0 1-2.6 2.6H3.3z" fill="#1a2a6a" fill-opacity=".11"/><path d="M0 2.3A2.3 2.3 0 0 1 2.3 0h8.6c.9 0 1.5.3 2 .9l1.1 1.2h11.8A2.2 2.2 0 0 1 28 4.3V8H0z" fill="#eeb72d"/><path d="M0 6.2h14.2l1.6-1.9H28v19.2a2.3 2.3 0 0 1-2.3 2.3H2.3A2.3 2.3 0 0 1 0 23.5z" fill="#fec72e"/><text x="8.3" y="27.3" font-family="Liberation Sans, sans-serif" font-weight="400" font-size="40" fill="#000" stroke="#000" stroke-width="1.1" stroke-linejoin="round" textLength="16.8" lengthAdjust="spacingAndGlyphs">?</text></svg>
<div class="t" style="top:30px;font-size:22px;line-height:22px;color:#000;letter-spacing:0.410px;left:166.30px;">logs</div>
<svg style="left:82px;top:65.39999999999999px;overflow:visible" width="24" height="24" viewBox="-12 -12 24 24"><path d="M-6.8 -3.1L0 3.3L6.8 -3.1" fill="none" stroke="#bebfbe" stroke-width="3.3" stroke-linecap="round" stroke-linejoin="round"/></svg>
<svg style="left:126px;top:62.19999999999999px;" width="30" height="27" viewBox="0 0 30 27"><path d="M2.5 25.2h24a2 2 0 0 0 2-2V5.5l.9.8v17.4a2.6 2.6 0 0 1-2.6 2.6H3.3z" fill="#1a2a6a" fill-opacity=".11"/><path d="M0 2.3A2.3 2.3 0 0 1 2.3 0h8.6c.9 0 1.5.3 2 .9l1.1 1.2h11.8A2.2 2.2 0 0 1 28 4.3V8H0z" fill="#eeb72d"/><path d="M0 6.2h14.2l1.6-1.9H28v19.2a2.3 2.3 0 0 1-2.3 2.3H2.3A2.3 2.3 0 0 1 0 23.5z" fill="#fec72e"/></svg>
<div class="t" style="top:68px;font-size:22px;line-height:22px;color:#000;letter-spacing:0.975px;left:166.30px;">public_html</div>
<svg style="left:156px;top:97.20000000000005px;overflow:visible" width="30" height="32" viewBox="0 -3 30 32"><path d="M2.5 25.2h24a2 2 0 0 0 2-2V5.5l.9.8v17.4a2.6 2.6 0 0 1-2.6 2.6H3.3z" fill="#1a2a6a" fill-opacity=".11"/><path d="M0 2.3A2.3 2.3 0 0 1 2.3 0h8.6c.9 0 1.5.3 2 .9l1.1 1.2h11.8A2.2 2.2 0 0 1 28 4.3V8H0z" fill="#eeb72d"/><path d="M0 6.2h14.2l1.6-1.9H28v19.2a2.3 2.3 0 0 1-2.3 2.3H2.3A2.3 2.3 0 0 1 0 23.5z" fill="#fec72e"/><text x="8.3" y="27.3" font-family="Liberation Sans, sans-serif" font-weight="400" font-size="40" fill="#000" stroke="#000" stroke-width="1.1" stroke-linejoin="round" textLength="16.8" lengthAdjust="spacingAndGlyphs">?</text></svg>
<div class="t" style="top:106px;font-size:22px;line-height:22px;color:#000;letter-spacing:0.719px;left:196.30px;">.quarantine</div>
<svg style="left:156px;top:135.20000000000005px;overflow:visible" width="30" height="32" viewBox="0 -3 30 32"><path d="M2.5 25.2h24a2 2 0 0 0 2-2V5.5l.9.8v17.4a2.6 2.6 0 0 1-2.6 2.6H3.3z" fill="#1a2a6a" fill-opacity=".11"/><path d="M0 2.3A2.3 2.3 0 0 1 2.3 0h8.6c.9 0 1.5.3 2 .9l1.1 1.2h11.8A2.2 2.2 0 0 1 28 4.3V8H0z" fill="#eeb72d"/><path d="M0 6.2h14.2l1.6-1.9H28v19.2a2.3 2.3 0 0 1-2.3 2.3H2.3A2.3 2.3 0 0 1 0 23.5z" fill="#fec72e"/><text x="8.3" y="27.3" font-family="Liberation Sans, sans-serif" font-weight="400" font-size="40" fill="#000" stroke="#000" stroke-width="1.1" stroke-linejoin="round" textLength="16.8" lengthAdjust="spacingAndGlyphs">?</text></svg>
<div class="t" style="top:144px;font-size:22px;line-height:22px;color:#000;letter-spacing:1.303px;left:196.30px;">.tmb</div>
<svg style="left:156px;top:173.20000000000005px;overflow:visible" width="30" height="32" viewBox="0 -3 30 32"><path d="M2.5 25.2h24a2 2 0 0 0 2-2V5.5l.9.8v17.4a2.6 2.6 0 0 1-2.6 2.6H3.3z" fill="#1a2a6a" fill-opacity=".11"/><path d="M0 2.3A2.3 2.3 0 0 1 2.3 0h8.6c.9 0 1.5.3 2 .9l1.1 1.2h11.8A2.2 2.2 0 0 1 28 4.3V8H0z" fill="#eeb72d"/><path d="M0 6.2h14.2l1.6-1.9H28v19.2a2.3 2.3 0 0 1-2.3 2.3H2.3A2.3 2.3 0 0 1 0 23.5z" fill="#fec72e"/><text x="8.3" y="27.3" font-family="Liberation Sans, sans-serif" font-weight="400" font-size="40" fill="#000" stroke="#000" stroke-width="1.1" stroke-linejoin="round" textLength="16.8" lengthAdjust="spacingAndGlyphs">?</text></svg>
<div class="t" style="top:182px;font-size:22px;line-height:22px;color:#000;letter-spacing:1.313px;left:196.30px;">cgi-bin</div>
<svg style="left:156px;top:211.20000000000005px;overflow:visible" width="30" height="32" viewBox="0 -3 30 32"><path d="M2.5 25.2h24a2 2 0 0 0 2-2V5.5l.9.8v17.4a2.6 2.6 0 0 1-2.6 2.6H3.3z" fill="#1a2a6a" fill-opacity=".11"/><path d="M0 2.3A2.3 2.3 0 0 1 2.3 0h8.6c.9 0 1.5.3 2 .9l1.1 1.2h11.8A2.2 2.2 0 0 1 28 4.3V8H0z" fill="#eeb72d"/><path d="M0 6.2h14.2l1.6-1.9H28v19.2a2.3 2.3 0 0 1-2.3 2.3H2.3A2.3 2.3 0 0 1 0 23.5z" fill="#fec72e"/><text x="8.3" y="27.3" font-family="Liberation Sans, sans-serif" font-weight="400" font-size="40" fill="#000" stroke="#000" stroke-width="1.1" stroke-linejoin="round" textLength="16.8" lengthAdjust="spacingAndGlyphs">?</text></svg>
<div class="t" style="top:220px;font-size:22px;line-height:22px;color:#000;letter-spacing:1.079px;left:196.30px;">wp-admin</div>
<svg style="left:114px;top:254.50000000000006px;overflow:visible" width="24" height="24" viewBox="-12 -12 24 24"><path d="M-2.9 -6.8L3.4 0L-2.9 6.8" fill="none" stroke="#bebfbe" stroke-width="3.3" stroke-linecap="round" stroke-linejoin="round"/></svg>
<div style="left:190px;top:247.70000000000005px;width:134px;height:38px;background:#d4d4d4;"></div>
<svg style="left:156px;top:252.20000000000005px;" width="34" height="27" viewBox="0 0 34 27"><path d="M2.5 25.2h24a2 2 0 0 0 2-2V5.5l.9.8v17.4a2.6 2.6 0 0 1-2.6 2.6H3.3z" fill="#1a2a6a" fill-opacity=".11"/><path d="M0 2.2A2.2 2.2 0 0 1 2.2 0h9.2c.9 0 1.5.3 2 .9l1 1.2h11.2A2.2 2.2 0 0 1 27.8 4.3V16H0z" fill="#eeb72d"/><path d="M3.6 14.600c.3-1 .9-1.5 1.900-1.500h25.200c1 0 1.300.6 1 1.500l-3.100 9.400c-.3 1-.9 1.500-2 1.500H2.2A2.2 2.2 0 0 1 0 23.300v-1.600z" fill="#fec72e"/><path d="M0 15.500v7.500a2 2 0 0 0 1 1.700L3.600 15z" fill="#fec72e"/></svg>
<div class="t" style="top:258px;font-size:22px;line-height:22px;color:#fff;letter-spacing:1.338px;left:196.30px;">wp-content</div>
<svg style="left:156px;top:287.20000000000005px;overflow:visible" width="30" height="32" viewBox="0 -3 30 32"><path d="M2.5 25.2h24a2 2 0 0 0 2-2V5.5l.9.8v17.4a2.6 2.6 0 0 1-2.6 2.6H3.3z" fill="#1a2a6a" fill-opacity=".11"/><path d="M0 2.3A2.3 2.3 0 0 1 2.3 0h8.6c.9 0 1.5.3 2 .9l1.1 1.2h11.8A2.2 2.2 0 0 1 28 4.3V8H0z" fill="#eeb72d"/><path d="M0 6.2h14.2l1.6-1.9H28v19.2a2.3 2.3 0 0 1-2.3 2.3H2.3A2.3 2.3 0 0 1 0 23.5z" fill="#fec72e"/><text x="8.3" y="27.3" font-family="Liberation Sans, sans-serif" font-weight="400" font-size="40" fill="#000" stroke="#000" stroke-width="1.1" stroke-linejoin="round" textLength="16.8" lengthAdjust="spacingAndGlyphs">?</text></svg>
<div class="t" style="top:296px;font-size:22px;line-height:22px;color:#000;left:196.30px;"></div>
</div>
<div style="left:2847px;top:412px;width:28px;height:294px;background:#fafafa;border-left:1px solid #e9e9e9;"></div>
<div style="left:2854px;top:454px;width:16px;height:162px;background:#c1c1c1;border-radius:8px;"></div>
<div style="left:1px;top:717px;width:198px;height:776px;background:#eeeeee;border:1px solid #d6d6d6;border-bottom-color:#b3b3b3;"></div>
<div style="left:4px;top:720px;width:192px;height:770px;background:#ececec;"></div>
<div style="left:207px;top:717px;width:2672px;height:776px;background:#eeeeee;border:1px solid #d6d6d6;border-bottom-color:#b3b3b3;"></div>
<div style="left:210px;top:720px;width:2666px;height:770px;background:#ececec;"></div>
<div style="left:4px;top:720px;width:162px;height:700px;background:#fff;"></div>
<div style="left:4px;top:753px;width:162px;height:1px;background:#e6e6e6;"></div>
<div style="left:3.5px;top:726px;width:2.5px;height:22px;background:#e6e6e6;"></div>
<div class="t" style="left:11.20px;top:728px;font-size:22px;line-height:22px;color:#000;letter-spacing:0.557px;">Filename</div>
<svg style="left:118.19999999999999px;top:724.4px;overflow:visible" width="24" height="24" viewBox="-12 -12 24 24"><path d="M-10.074 4.9639999999999995L0 -4.9639999999999995L10.074 4.9639999999999995" fill="none" stroke="#676767" stroke-width="4.2" stroke-linecap="round" stroke-linejoin="round"/></svg>
<div style="left:166px;top:720px;width:28px;height:702px;background:#fafafa;border-left:1px solid #e9e9e9;"></div>
<div style="left:194px;top:720px;width:2px;height:702px;background:#f1f1f1;"></div>
<div style="left:174px;top:726px;width:16px;height:580px;background:#c1c1c1;border-radius:8px;"></div>
<div style="left:4px;top:1421px;width:164px;height:28px;background:#fafafa;border-top:1px solid #f0f0f0;"></div>
<div style="left:168px;top:1422px;width:28px;height:27px;background:#ececec;"></div>
<div style="left:10px;top:1428px;width:36px;height:16px;background:#c1c1c1;border-radius:8px;"></div>
<div style="left:4px;top:754px;width:162px;height:666px;overflow:hidden;">
<svg style="left:0px;top:6.399999999999999px;" width="30" height="27" viewBox="0 0 30 27"><path d="M2.5 25.2h24a2 2 0 0 0 2-2V5.5l.9.8v17.4a2.6 2.6 0 0 1-2.6 2.6H3.3z" fill="#1a2a6a" fill-opacity=".11"/><path d="M0 2.3A2.3 2.3 0 0 1 2.3 0h8.6c.9 0 1.5.3 2 .9l1.1 1.2h11.8A2.2 2.2 0 0 1 28 4.3V8H0z" fill="#eeb72d"/><path d="M0 6.2h14.2l1.6-1.9H28v19.2a2.3 2.3 0 0 1-2.3 2.3H2.3A2.3 2.3 0 0 1 0 23.5z" fill="#fec72e"/></svg>
<div class="t" style="left:42.53px;top:8px;font-size:26px;line-height:26px;color:#000;letter-spacing:-0.199px;">..</div>
<svg style="left:0px;top:46.4px;" width="30" height="27" viewBox="0 0 30 27"><path d="M2.5 25.2h24a2 2 0 0 0 2-2V5.5l.9.8v17.4a2.6 2.6 0 0 1-2.6 2.6H3.3z" fill="#1a2a6a" fill-opacity=".11"/><path d="M0 2.3A2.3 2.3 0 0 1 2.3 0h8.6c.9 0 1.5.3 2 .9l1.1 1.2h11.8A2.2 2.2 0 0 1 28 4.3V8H0z" fill="#eeb72d"/><path d="M0 6.2h14.2l1.6-1.9H28v19.2a2.3 2.3 0 0 1-2.3 2.3H2.3A2.3 2.3 0 0 1 0 23.5z" fill="#fec72e"/></svg>
<div class="t" style="left:42.53px;top:48px;font-size:26px;line-height:26px;color:#000;letter-spacing:-0.384px;">.Trash</div>
<svg style="left:0px;top:86.4px;" width="30" height="27" viewBox="0 0 30 27"><path d="M2.5 25.2h24a2 2 0 0 0 2-2V5.5l.9.8v17.4a2.6 2.6 0 0 1-2.6 2.6H3.3z" fill="#1a2a6a" fill-opacity=".11"/><path d="M0 2.3A2.3 2.3 0 0 1 2.3 0h8.6c.9 0 1.5.3 2 .9l1.1 1.2h11.8A2.2 2.2 0 0 1 28 4.3V8H0z" fill="#eeb72d"/><path d="M0 6.2h14.2l1.6-1.9H28v19.2a2.3 2.3 0 0 1-2.3 2.3H2.3A2.3 2.3 0 0 1 0 23.5z" fill="#fec72e"/></svg>
<div class="t" style="left:42.53px;top:88px;font-size:26px;line-height:26px;color:#000;letter-spacing:0.858px;">.config</div>
<svg style="left:0px;top:126.4px;" width="30" height="27" viewBox="0 0 30 27"><path d="M2.5 25.2h24a2 2 0 0 0 2-2V5.5l.9.8v17.4a2.6 2.6 0 0 1-2.6 2.6H3.3z" fill="#1a2a6a" fill-opacity=".11"/><path d="M0 2.3A2.3 2.3 0 0 1 2.3 0h8.6c.9 0 1.5.3 2 .9l1.1 1.2h11.8A2.2 2.2 0 0 1 28 4.3V8H0z" fill="#eeb72d"/><path d="M0 6.2h14.2l1.6-1.9H28v19.2a2.3 2.3 0 0 1-2.3 2.3H2.3A2.3 2.3 0 0 1 0 23.5z" fill="#fec72e"/></svg>
<div class="t" style="left:42.53px;top:128px;font-size:26px;line-height:26px;color:#000;letter-spacing:0.492px;">.cups</div>
<svg style="left:0px;top:166.4px;" width="30" height="27" viewBox="0 0 30 27"><path d="M2.5 25.2h24a2 2 0 0 0 2-2V5.5l.9.8v17.4a2.6 2.6 0 0 1-2.6 2.6H3.3z" fill="#1a2a6a" fill-opacity=".11"/><path d="M0 2.3A2.3 2.3 0 0 1 2.3 0h8.6c.9 0 1.5.3 2 .9l1.1 1.2h11.8A2.2 2.2 0 0 1 28 4.3V8H0z" fill="#eeb72d"/><path d="M0 6.2h14.2l1.6-1.9H28v19.2a2.3 2.3 0 0 1-2.3 2.3H2.3A2.3 2.3 0 0 1 0 23.5z" fill="#fec72e"/></svg>
<div class="t" style="left:42.53px;top:168px;font-size:26px;line-height:26px;color:#000;letter-spacing:0.579px;">.kindle</div>
<svg style="left:0px;top:206.4px;" width="30" height="27" viewBox="0 0 30 27"><path d="M2.5 25.2h24a2 2 0 0 0 2-2V5.5l.9.8v17.4a2.6 2.6 0 0 1-2.6 2.6H3.3z" fill="#1a2a6a" fill-opacity=".11"/><path d="M0 2.3A2.3 2.3 0 0 1 2.3 0h8.6c.9 0 1.5.3 2 .9l1.1 1.2h11.8A2.2 2.2 0 0 1 28 4.3V8H0z" fill="#eeb72d"/><path d="M0 6.2h14.2l1.6-1.9H28v19.2a2.3 2.3 0 0 1-2.3 2.3H2.3A2.3 2.3 0 0 1 0 23.5z" fill="#fec72e"/></svg>
<div class="t" style="top:208px;font-size:26px;line-height:26px;color:#000;letter-spacing:0.584px;left:43.85px;">Applications</div>
<svg style="left:0px;top:246.4px;" width="30" height="27" viewBox="0 0 30 27"><path d="M2.5 25.2h24a2 2 0 0 0 2-2V5.5l.9.8v17.4a2.6 2.6 0 0 1-2.6 2.6H3.3z" fill="#1a2a6a" fill-opacity=".11"/><path d="M0 2.3A2.3 2.3 0 0 1 2.3 0h8.6c.9 0 1.5.3 2 .9l1.1 1.2h11.8A2.2 2.2 0 0 1 28 4.3V8H0z" fill="#eeb72d"/><path d="M0 6.2h14.2l1.6-1.9H28v19.2a2.3 2.3 0 0 1-2.3 2.3H2.3A2.3 2.3 0 0 1 0 23.5z" fill="#fec72e"/></svg>
<div class="t" style="top:248px;font-size:26px;line-height:26px;color:#000;letter-spacing:0.351px;left:43.58px;">Creative Cloud Files</div>
<svg style="left:0px;top:286.4px;" width="30" height="27" viewBox="0 0 30 27"><path d="M2.5 25.2h24a2 2 0 0 0 2-2V5.5l.9.8v17.4a2.6 2.6 0 0 1-2.6 2.6H3.3z" fill="#1a2a6a" fill-opacity=".11"/><path d="M0 2.3A2.3 2.3 0 0 1 2.3 0h8.6c.9 0 1.5.3 2 .9l1.1 1.2h11.8A2.2 2.2 0 0 1 28 4.3V8H0z" fill="#eeb72d"/><path d="M0 6.2h14.2l1.6-1.9H28v19.2a2.3 2.3 0 0 1-2.3 2.3H2.3A2.3 2.3 0 0 1 0 23.5z" fill="#fec72e"/></svg>
<div class="t" style="left:42.77px;top:288px;font-size:26px;line-height:26px;color:#000;letter-spacing:0.607px;">Desktop</div>
<svg style="left:0px;top:326.4px;" width="30" height="27" viewBox="0 0 30 27"><path d="M2.5 25.2h24a2 2 0 0 0 2-2V5.5l.9.8v17.4a2.6 2.6 0 0 1-2.6 2.6H3.3z" fill="#1a2a6a" fill-opacity=".11"/><path d="M0 2.3A2.3 2.3 0 0 1 2.3 0h8.6c.9 0 1.5.3 2 .9l1.1 1.2h11.8A2.2 2.2 0 0 1 28 4.3V8H0z" fill="#eeb72d"/><path d="M0 6.2h14.2l1.6-1.9H28v19.2a2.3 2.3 0 0 1-2.3 2.3H2.3A2.3 2.3 0 0 1 0 23.5z" fill="#fec72e"/></svg>
<div class="t" style="top:328px;font-size:26px;line-height:26px;color:#000;letter-spacing:0.657px;left:42.77px;">Documents</div>
<svg style="left:0px;top:366.4px;" width="30" height="27" viewBox="0 0 30 27"><path d="M2.5 25.2h24a2 2 0 0 0 2-2V5.5l.9.8v17.4a2.6 2.6 0 0 1-2.6 2.6H3.3z" fill="#1a2a6a" fill-opacity=".11"/><path d="M0 2.3A2.3 2.3 0 0 1 2.3 0h8.6c.9 0 1.5.3 2 .9l1.1 1.2h11.8A2.2 2.2 0 0 1 28 4.3V8H0z" fill="#eeb72d"/><path d="M0 6.2h14.2l1.6-1.9H28v19.2a2.3 2.3 0 0 1-2.3 2.3H2.3A2.3 2.3 0 0 1 0 23.5z" fill="#fec72e"/></svg>
<div class="t" style="top:368px;font-size:26px;line-height:26px;color:#000;letter-spacing:0.429px;left:42.77px;">Downloads</div>
<svg style="left:0px;top:406.4px;" width="30" height="27" viewBox="0 0 30 27"><path d="M2.5 25.2h24a2 2 0 0 0 2-2V5.5l.9.8v17.4a2.6 2.6 0 0 1-2.6 2.6H3.3z" fill="#1a2a6a" fill-opacity=".11"/><path d="M0 2.3A2.3 2.3 0 0 1 2.3 0h8.6c.9 0 1.5.3 2 .9l1.1 1.2h11.8A2.2 2.2 0 0 1 28 4.3V8H0z" fill="#eeb72d"/><path d="M0 6.2h14.2l1.6-1.9H28v19.2a2.3 2.3 0 0 1-2.3 2.3H2.3A2.3 2.3 0 0 1 0 23.5z" fill="#fec72e"/></svg>
<div class="t" style="top:408px;font-size:26px;line-height:26px;color:#000;letter-spacing:0.190px;left:43.59px;">Google Drive</div>
<svg style="left:0px;top:446.4px;" width="30" height="27" viewBox="0 0 30 27"><path d="M2.5 25.2h24a2 2 0 0 0 2-2V5.5l.9.8v17.4a2.6 2.6 0 0 1-2.6 2.6H3.3z" fill="#1a2a6a" fill-opacity=".11"/><path d="M0 2.3A2.3 2.3 0 0 1 2.3 0h8.6c.9 0 1.5.3 2 .9l1.1 1.2h11.8A2.2 2.2 0 0 1 28 4.3V8H0z" fill="#eeb72d"/><path d="M0 6.2h14.2l1.6-1.9H28v19.2a2.3 2.3 0 0 1-2.3 2.3H2.3A2.3 2.3 0 0 1 0 23.5z" fill="#fec72e"/></svg>
<div class="t" style="left:42.77px;top:448px;font-size:26px;line-height:26px;color:#000;letter-spacing:0.402px;">Library</div>
<svg style="left:0px;top:486.4px;" width="30" height="27" viewBox="0 0 30 27"><path d="M2.5 25.2h24a2 2 0 0 0 2-2V5.5l.9.8v17.4a2.6 2.6 0 0 1-2.6 2.6H3.3z" fill="#1a2a6a" fill-opacity=".11"/><path d="M0 2.3A2.3 2.3 0 0 1 2.3 0h8.6c.9 0 1.5.3 2 .9l1.1 1.2h11.8A2.2 2.2 0 0 1 28 4.3V8H0z" fill="#eeb72d"/><path d="M0 6.2h14.2l1.6-1.9H28v19.2a2.3 2.3 0 0 1-2.3 2.3H2.3A2.3 2.3 0 0 1 0 23.5z" fill="#fec72e"/></svg>
<div class="t" style="left:42.77px;top:488px;font-size:26px;line-height:26px;color:#000;letter-spacing:0.444px;">Movies</div>
<svg style="left:0px;top:526.4px;" width="30" height="27" viewBox="0 0 30 27"><path d="M2.5 25.2h24a2 2 0 0 0 2-2V5.5l.9.8v17.4a2.6 2.6 0 0 1-2.6 2.6H3.3z" fill="#1a2a6a" fill-opacity=".11"/><path d="M0 2.3A2.3 2.3 0 0 1 2.3 0h8.6c.9 0 1.5.3 2 .9l1.1 1.2h11.8A2.2 2.2 0 0 1 28 4.3V8H0z" fill="#eeb72d"/><path d="M0 6.2h14.2l1.6-1.9H28v19.2a2.3 2.3 0 0 1-2.3 2.3H2.3A2.3 2.3 0 0 1 0 23.5z" fill="#fec72e"/></svg>
<div class="t" style="left:42.77px;top:528px;font-size:26px;line-height:26px;color:#000;letter-spacing:0.531px;">Music</div>
<svg style="left:0px;top:566.4px;" width="30" height="27" viewBox="0 0 30 27"><path d="M2.5 25.2h24a2 2 0 0 0 2-2V5.5l.9.8v17.4a2.6 2.6 0 0 1-2.6 2.6H3.3z" fill="#1a2a6a" fill-opacity=".11"/><path d="M0 2.3A2.3 2.3 0 0 1 2.3 0h8.6c.9 0 1.5.3 2 .9l1.1 1.2h11.8A2.2 2.2 0 0 1 28 4.3V8H0z" fill="#eeb72d"/><path d="M0 6.2h14.2l1.6-1.9H28v19.2a2.3 2.3 0 0 1-2.3 2.3H2.3A2.3 2.3 0 0 1 0 23.5z" fill="#fec72e"/></svg>
<div class="t" style="left:42.77px;top:568px;font-size:26px;line-height:26px;color:#000;letter-spacing:0.593px;">Pictures</div>
<svg style="left:0px;top:606.4px;" width="30" height="27" viewBox="0 0 30 27"><path d="M2.5 25.2h24a2 2 0 0 0 2-2V5.5l.9.8v17.4a2.6 2.6 0 0 1-2.6 2.6H3.3z" fill="#1a2a6a" fill-opacity=".11"/><path d="M0 2.3A2.3 2.3 0 0 1 2.3 0h8.6c.9 0 1.5.3 2 .9l1.1 1.2h11.8A2.2 2.2 0 0 1 28 4.3V8H0z" fill="#eeb72d"/><path d="M0 6.2h14.2l1.6-1.9H28v19.2a2.3 2.3 0 0 1-2.3 2.3H2.3A2.3 2.3 0 0 1 0 23.5z" fill="#fec72e"/></svg>
<div class="t" style="left:42.77px;top:608px;font-size:26px;line-height:26px;color:#000;letter-spacing:0.401px;">Public</div>
<svg style="left:3px;top:643.5px;" width="26" height="33" viewBox="0 0 26 33"><path d="M3.5 3.5h13l7.5 7.5v19.5a1.8 1.8 0 0 1-1.8 1.8H3.5z" fill="#ebebeb"/><path d="M1 2.2A2.2 2.2 0 0 1 3.2 0h12.3L23 7.5v20.8a2.2 2.2 0 0 1-2.2 2.2H3.2A2.2 2.2 0 0 1 1 28.300z" fill="#fdfdfd" stroke="#ededed" stroke-width="1"/><path d="M15.5 0L23 7.5h-5.6a1.9 1.9 0 0 1-1.9-1.900z" fill="#e9e9e9"/></svg>
<div class="t" style="top:648px;font-size:26px;line-height:26px;color:#000;letter-spacing:-0.538px;left:42.53px;">.CFUserTextEncoding</div>
</div>
<div style="left:4px;top:1449px;width:192px;height:1px;background:#ededed;"></div>
<div style="left:4px;top:1450px;width:192px;height:1px;background:#b9b9b9;"></div>
<div style="left:4px;top:1451px;width:192px;height:1px;background:#f3f3f3;"></div>
<div style="left:4px;top:1452px;width:188px;height:38px;overflow:hidden;">
<div class="t" style="top:4px;font-size:22px;line-height:22px;color:#000;letter-spacing:0.544px;left:10.50px;">3 files and 15 directories.</div>
</div>
<div style="left:210px;top:720px;width:2666px;height:729px;background:#fff;"></div>
<div style="left:210px;top:753px;width:2666px;height:1px;background:#e6e6e6;"></div>
<div style="left:210px;top:726px;width:3px;height:22px;background:#e6e6e6;"></div>
<div style="left:508.5px;top:726px;width:3px;height:22px;background:#e6e6e6;"></div>
<div style="left:659px;top:726px;width:3px;height:22px;background:#e6e6e6;"></div>
<div style="left:819px;top:726px;width:3px;height:22px;background:#e6e6e6;"></div>
<div style="left:1163px;top:726px;width:3px;height:22px;background:#e6e6e6;"></div>
<div style="left:1409.5px;top:726px;width:3px;height:22px;background:#e6e6e6;"></div>
<div style="left:1579.5px;top:726px;width:3px;height:22px;background:#e6e6e6;"></div>
<div style="left:2874px;top:726px;width:3px;height:22px;background:#e6e6e6;"></div>
<div class="t" style="left:218.30px;top:728px;font-size:22px;line-height:22px;color:#000;letter-spacing:0.343px;">Filename</div>
<div class="t" style="left:573.20px;top:728px;font-size:22px;line-height:22px;color:#000;letter-spacing:0.559px;">Filesize</div>
<div class="t" style="left:667.10px;top:728px;font-size:22px;line-height:22px;color:#000;letter-spacing:0.879px;">Filetype</div>
<div class="t" style="left:827.80px;top:728px;font-size:22px;line-height:22px;color:#000;letter-spacing:0.964px;">Last modified</div>
<div class="t" style="left:1171.30px;top:728px;font-size:22px;line-height:22px;color:#000;letter-spacing:0.669px;">Permissions</div>
<svg style="left:1310.2px;top:724.4px;overflow:visible" width="24" height="24" viewBox="-12 -12 24 24"><path d="M-10.074 4.9639999999999995L0 -4.9639999999999995L10.074 4.9639999999999995" fill="none" stroke="#676767" stroke-width="4.2" stroke-linecap="round" stroke-linejoin="round"/></svg>
<div class="t" style="left:1418.26px;top:728px;font-size:22px;line-height:22px;color:#000;letter-spacing:0.611px;">Owner/Group</div>
<svg style="left:210px;top:760.4px;" width="30" height="27" viewBox="0 0 30 27"><path d="M2.5 25.2h24a2 2 0 0 0 2-2V5.5l.9.8v17.4a2.6 2.6 0 0 1-2.6 2.6H3.3z" fill="#1a2a6a" fill-opacity=".11"/><path d="M0 2.3A2.3 2.3 0 0 1 2.3 0h8.6c.9 0 1.5.3 2 .9l1.1 1.2h11.8A2.2 2.2 0 0 1 28 4.3V8H0z" fill="#eeb72d"/><path d="M0 6.2h14.2l1.6-1.9H28v19.2a2.3 2.3 0 0 1-2.3 2.3H2.3A2.3 2.3 0 0 1 0 23.5z" fill="#fec72e"/></svg>
<div class="t" style="top:762px;font-size:26px;line-height:26px;color:#000;letter-spacing:0.026px;left:252.00px;">..</div>
<div style="left:210px;top:794px;width:1370px;height:40px;background:#9a33cd;"></div>
<svg style="left:210px;top:800.4px;" width="30" height="27" viewBox="0 0 30 27"><path d="M2.5 25.2h24a2 2 0 0 0 2-2V5.5l.9.8v17.4a2.6 2.6 0 0 1-2.6 2.6H3.3z" fill="#1a2a6a" fill-opacity=".11"/><path d="M0 2.3A2.3 2.3 0 0 1 2.3 0h8.6c.9 0 1.5.3 2 .9l1.1 1.2h11.8A2.2 2.2 0 0 1 28 4.3V8H0z" fill="#eeb72d"/><path d="M0 6.2h14.2l1.6-1.9H28v19.2a2.3 2.3 0 0 1-2.3 2.3H2.3A2.3 2.3 0 0 1 0 23.5z" fill="#fec72e"/></svg>
<div class="t" style="top:802px;font-size:26px;line-height:26px;color:#fff;letter-spacing:0.758px;left:252.00px;">plugins.deactivated</div>
<div class="t" style="left:659.57px;top:802px;font-size:26px;line-height:26px;color:#fff;letter-spacing:0.859px;">Directory</div>
<svg style="left:210px;top:840.4px;" width="30" height="27" viewBox="0 0 30 27"><path d="M2.5 25.2h24a2 2 0 0 0 2-2V5.5l.9.8v17.4a2.6 2.6 0 0 1-2.6 2.6H3.3z" fill="#1a2a6a" fill-opacity=".11"/><path d="M0 2.3A2.3 2.3 0 0 1 2.3 0h8.6c.9 0 1.5.3 2 .9l1.1 1.2h11.8A2.2 2.2 0 0 1 28 4.3V8H0z" fill="#eeb72d"/><path d="M0 6.2h14.2l1.6-1.9H28v19.2a2.3 2.3 0 0 1-2.3 2.3H2.3A2.3 2.3 0 0 1 0 23.5z" fill="#fec72e"/></svg>
<div class="t" style="top:842px;font-size:26px;line-height:26px;color:#000;letter-spacing:1.160px;left:252.00px;">et-cache</div>
<div class="t" style="left:659.57px;top:842px;font-size:26px;line-height:26px;color:#000;letter-spacing:0.859px;">Directory</div>
<div class="t" style="left:819.22px;top:842px;font-size:26px;line-height:26px;color:#000;letter-spacing:0.203px;">11/05/2021 </div>
<div class="t" style="left:957.89px;top:842px;font-size:26px;line-height:26px;color:#000;letter-spacing:0.702px;">21:06:20</div>
<div class="t" style="left:1164.78px;top:842px;font-size:26px;line-height:26px;color:#000;letter-spacing:0.923px;">0755</div>
<div class="t" style="left:1409.07px;top:842px;font-size:26px;line-height:26px;color:#000;letter-spacing:0.760px;">772 772</div>
<svg style="left:210px;top:880.4px;" width="30" height="27" viewBox="0 0 30 27"><path d="M2.5 25.2h24a2 2 0 0 0 2-2V5.5l.9.8v17.4a2.6 2.6 0 0 1-2.6 2.6H3.3z" fill="#1a2a6a" fill-opacity=".11"/><path d="M0 2.3A2.3 2.3 0 0 1 2.3 0h8.6c.9 0 1.5.3 2 .9l1.1 1.2h11.8A2.2 2.2 0 0 1 28 4.3V8H0z" fill="#eeb72d"/><path d="M0 6.2h14.2l1.6-1.9H28v19.2a2.3 2.3 0 0 1-2.3 2.3H2.3A2.3 2.3 0 0 1 0 23.5z" fill="#fec72e"/></svg>
<div class="t" style="top:882px;font-size:26px;line-height:26px;color:#000;letter-spacing:1.083px;left:252.00px;">mu-plugins</div>
<div class="t" style="left:659.57px;top:882px;font-size:26px;line-height:26px;color:#000;letter-spacing:0.859px;">Directory</div>
<div class="t" style="left:819.22px;top:882px;font-size:26px;line-height:26px;color:#000;letter-spacing:0.458px;">10/25/2021 </div>
<div class="t" style="left:961.12px;top:882px;font-size:26px;line-height:26px;color:#000;letter-spacing:0.654px;">12:52:52</div>
<div class="t" style="left:1164.78px;top:882px;font-size:26px;line-height:26px;color:#000;letter-spacing:0.923px;">0755</div>
<div class="t" style="left:1409.07px;top:882px;font-size:26px;line-height:26px;color:#000;letter-spacing:0.760px;">772 772</div>
<svg style="left:210px;top:920.4px;" width="30" height="27" viewBox="0 0 30 27"><path d="M2.5 25.2h24a2 2 0 0 0 2-2V5.5l.9.8v17.4a2.6 2.6 0 0 1-2.6 2.6H3.3z" fill="#1a2a6a" fill-opacity=".11"/><path d="M0 2.3A2.3 2.3 0 0 1 2.3 0h8.6c.9 0 1.5.3 2 .9l1.1 1.2h11.8A2.2 2.2 0 0 1 28 4.3V8H0z" fill="#eeb72d"/><path d="M0 6.2h14.2l1.6-1.9H28v19.2a2.3 2.3 0 0 1-2.3 2.3H2.3A2.3 2.3 0 0 1 0 23.5z" fill="#fec72e"/></svg>
<div class="t" style="top:922px;font-size:26px;line-height:26px;color:#000;letter-spacing:0.790px;left:252.00px;">themes</div>
<div class="t" style="left:659.57px;top:922px;font-size:26px;line-height:26px;color:#000;letter-spacing:0.859px;">Directory</div>
<div class="t" style="left:819.22px;top:922px;font-size:26px;line-height:26px;color:#000;letter-spacing:0.203px;">11/05/2021 </div>
<div class="t" style="left:956.52px;top:922px;font-size:26px;line-height:26px;color:#000;letter-spacing:0.909px;">10:20:25</div>
<div class="t" style="left:1164.78px;top:922px;font-size:26px;line-height:26px;color:#000;letter-spacing:0.923px;">0755</div>
<div class="t" style="left:1409.07px;top:922px;font-size:26px;line-height:26px;color:#000;letter-spacing:0.760px;">772 772</div>
<svg style="left:210px;top:960.4px;" width="30" height="27" viewBox="0 0 30 27"><path d="M2.5 25.2h24a2 2 0 0 0 2-2V5.5l.9.8v17.4a2.6 2.6 0 0 1-2.6 2.6H3.3z" fill="#1a2a6a" fill-opacity=".11"/><path d="M0 2.3A2.3 2.3 0 0 1 2.3 0h8.6c.9 0 1.5.3 2 .9l1.1 1.2h11.8A2.2 2.2 0 0 1 28 4.3V8H0z" fill="#eeb72d"/><path d="M0 6.2h14.2l1.6-1.9H28v19.2a2.3 2.3 0 0 1-2.3 2.3H2.3A2.3 2.3 0 0 1 0 23.5z" fill="#fec72e"/></svg>
<div class="t" style="top:962px;font-size:26px;line-height:26px;color:#000;letter-spacing:1.151px;left:252.00px;">updraft</div>
<div class="t" style="left:659.57px;top:962px;font-size:26px;line-height:26px;color:#000;letter-spacing:0.859px;">Directory</div>
<div class="t" style="left:819.22px;top:962px;font-size:26px;line-height:26px;color:#000;letter-spacing:0.458px;">10/25/2021 </div>
<div class="t" style="left:961.12px;top:962px;font-size:26px;line-height:26px;color:#000;letter-spacing:-0.312px;">11:21:06</div>
<div class="t" style="left:1164.78px;top:962px;font-size:26px;line-height:26px;color:#000;letter-spacing:0.923px;">0755</div>
<div class="t" style="left:1409.07px;top:962px;font-size:26px;line-height:26px;color:#000;letter-spacing:0.760px;">772 772</div>
<svg style="left:210px;top:1000.4px;" width="30" height="27" viewBox="0 0 30 27"><path d="M2.5 25.2h24a2 2 0 0 0 2-2V5.5l.9.8v17.4a2.6 2.6 0 0 1-2.6 2.6H3.3z" fill="#1a2a6a" fill-opacity=".11"/><path d="M0 2.3A2.3 2.3 0 0 1 2.3 0h8.6c.9 0 1.5.3 2 .9l1.1 1.2h11.8A2.2 2.2 0 0 1 28 4.3V8H0z" fill="#eeb72d"/><path d="M0 6.2h14.2l1.6-1.9H28v19.2a2.3 2.3 0 0 1-2.3 2.3H2.3A2.3 2.3 0 0 1 0 23.5z" fill="#fec72e"/></svg>
<div class="t" style="top:1002px;font-size:26px;line-height:26px;color:#000;letter-spacing:0.797px;left:252.00px;">upgrade</div>
<div class="t" style="left:659.57px;top:1002px;font-size:26px;line-height:26px;color:#000;letter-spacing:0.859px;">Directory</div>
<div class="t" style="left:819.22px;top:1002px;font-size:26px;line-height:26px;color:#000;letter-spacing:0.203px;">11/05/2021 </div>
<div class="t" style="left:956.52px;top:1002px;font-size:26px;line-height:26px;color:#000;letter-spacing:0.909px;">10:20:25</div>
<div class="t" style="left:1164.78px;top:1002px;font-size:26px;line-height:26px;color:#000;letter-spacing:0.923px;">0755</div>
<div class="t" style="left:1409.07px;top:1002px;font-size:26px;line-height:26px;color:#000;letter-spacing:0.760px;">772 772</div>
<svg style="left:210px;top:1040.4px;" width="30" height="27" viewBox="0 0 30 27"><path d="M2.5 25.2h24a2 2 0 0 0 2-2V5.5l.9.8v17.4a2.6 2.6 0 0 1-2.6 2.6H3.3z" fill="#1a2a6a" fill-opacity=".11"/><path d="M0 2.3A2.3 2.3 0 0 1 2.3 0h8.6c.9 0 1.5.3 2 .9l1.1 1.2h11.8A2.2 2.2 0 0 1 28 4.3V8H0z" fill="#eeb72d"/><path d="M0 6.2h14.2l1.6-1.9H28v19.2a2.3 2.3 0 0 1-2.3 2.3H2.3A2.3 2.3 0 0 1 0 23.5z" fill="#fec72e"/></svg>
<div class="t" style="top:1042px;font-size:26px;line-height:26px;color:#000;letter-spacing:0.703px;left:252.00px;">uploads</div>
<div class="t" style="left:659.57px;top:1042px;font-size:26px;line-height:26px;color:#000;letter-spacing:0.859px;">Directory</div>
<div class="t" style="left:819.22px;top:1042px;font-size:26px;line-height:26px;color:#000;letter-spacing:0.458px;">10/25/2021 </div>
<div class="t" style="left:961.12px;top:1042px;font-size:26px;line-height:26px;color:#000;letter-spacing:0.797px;">14:24:02</div>
<div class="t" style="left:1164.78px;top:1042px;font-size:26px;line-height:26px;color:#000;letter-spacing:0.923px;">0755</div>
<div class="t" style="left:1409.07px;top:1042px;font-size:26px;line-height:26px;color:#000;letter-spacing:0.760px;">772 772</div>
<svg style="left:210px;top:1080.4px;" width="30" height="27" viewBox="0 0 30 27"><path d="M2.5 25.2h24a2 2 0 0 0 2-2V5.5l.9.8v17.4a2.6 2.6 0 0 1-2.6 2.6H3.3z" fill="#1a2a6a" fill-opacity=".11"/><path d="M0 2.3A2.3 2.3 0 0 1 2.3 0h8.6c.9 0 1.5.3 2 .9l1.1 1.2h11.8A2.2 2.2 0 0 1 28 4.3V8H0z" fill="#eeb72d"/><path d="M0 6.2h14.2l1.6-1.9H28v19.2a2.3 2.3 0 0 1-2.3 2.3H2.3A2.3 2.3 0 0 1 0 23.5z" fill="#fec72e"/></svg>
<div class="t" style="top:1082px;font-size:26px;line-height:26px;color:#000;letter-spacing:1.181px;left:252.00px;">wphb-cache</div>
<div class="t" style="left:659.57px;top:1082px;font-size:26px;line-height:26px;color:#000;letter-spacing:0.859px;">Directory</div>
<div class="t" style="left:820.18px;top:1082px;font-size:26px;line-height:26px;color:#000;letter-spacing:0.462px;">02/01/2021 </div>
<div class="t" style="left:961.12px;top:1082px;font-size:26px;line-height:26px;color:#000;letter-spacing:1.017px;">10:04:33</div>
<div class="t" style="left:1164.78px;top:1082px;font-size:26px;line-height:26px;color:#000;letter-spacing:0.923px;">0755</div>
<div class="t" style="left:1409.07px;top:1082px;font-size:26px;line-height:26px;color:#000;letter-spacing:0.760px;">772 772</div>
<svg style="left:210px;top:1120.4px;" width="30" height="27" viewBox="0 0 30 27"><path d="M2.5 25.2h24a2 2 0 0 0 2-2V5.5l.9.8v17.4a2.6 2.6 0 0 1-2.6 2.6H3.3z" fill="#1a2a6a" fill-opacity=".11"/><path d="M0 2.3A2.3 2.3 0 0 1 2.3 0h8.6c.9 0 1.5.3 2 .9l1.1 1.2h11.8A2.2 2.2 0 0 1 28 4.3V8H0z" fill="#eeb72d"/><path d="M0 6.2h14.2l1.6-1.9H28v19.2a2.3 2.3 0 0 1-2.3 2.3H2.3A2.3 2.3 0 0 1 0 23.5z" fill="#fec72e"/></svg>
<div class="t" style="top:1122px;font-size:26px;line-height:26px;color:#000;letter-spacing:1.277px;left:252.00px;">wphb-logs</div>
<div class="t" style="left:659.57px;top:1122px;font-size:26px;line-height:26px;color:#000;letter-spacing:0.859px;">Directory</div>
<div class="t" style="left:820.18px;top:1122px;font-size:26px;line-height:26px;color:#000;letter-spacing:0.462px;">02/01/2021 </div>
<div class="t" style="left:962.08px;top:1122px;font-size:26px;line-height:26px;color:#000;letter-spacing:1.534px;">08:48:28</div>
<div class="t" style="left:1164.78px;top:1122px;font-size:26px;line-height:26px;color:#000;letter-spacing:0.923px;">0755</div>
<div class="t" style="left:1409.07px;top:1122px;font-size:26px;line-height:26px;color:#000;letter-spacing:0.760px;">772 772</div>
<svg style="left:213px;top:1157.5px;" width="26" height="33" viewBox="0 0 26 33"><path d="M3.5 3.5h13l7.5 7.5v19.5a1.8 1.8 0 0 1-1.8 1.8H3.5z" fill="#ebebeb"/><path d="M1 2.2A2.2 2.2 0 0 1 3.2 0h12.3L23 7.5v20.8a2.2 2.2 0 0 1-2.2 2.2H3.2A2.2 2.2 0 0 1 1 28.300z" fill="#fdfdfd" stroke="#ededed" stroke-width="1"/><path d="M15.5 0L23 7.5h-5.6a1.9 1.9 0 0 1-1.9-1.900z" fill="#e9e9e9"/></svg>
<div class="t" style="top:1162px;font-size:26px;line-height:26px;color:#000;letter-spacing:0.693px;left:252.00px;">index.php</div>
<div class="t" style="left:612.39px;top:1162px;font-size:26px;line-height:26px;color:#000;letter-spacing:2.318px;">28</div>
<div class="t" style="left:659.57px;top:1162px;font-size:26px;line-height:26px;color:#000;letter-spacing:0.525px;">PHP script</div>
<div class="t" style="left:820.18px;top:1162px;font-size:26px;line-height:26px;color:#000;letter-spacing:0.577px;">01/08/2012 </div>
<div class="t" style="left:962.79px;top:1162px;font-size:26px;line-height:26px;color:#000;letter-spacing:-0.056px;">22:31:12</div>
<div class="t" style="left:1164.78px;top:1162px;font-size:26px;line-height:26px;color:#000;letter-spacing:1.912px;">0644</div>
<div class="t" style="left:1409.07px;top:1162px;font-size:26px;line-height:26px;color:#000;letter-spacing:0.760px;">772 772</div>
<div style="left:210px;top:1449px;width:2666px;height:1px;background:#ededed;"></div>
<div style="left:210px;top:1450px;width:2666px;height:1px;background:#b9b9b9;"></div>
<div style="left:210px;top:1451px;width:2666px;height:1px;background:#f3f3f3;"></div>
<div class="t" style="left:219.80px;top:1456px;font-size:22px;line-height:22px;color:#000;letter-spacing:0.748px;">Selected 1 directory.</div>
<svg style="left:1570px;top:760px;overflow:visible" width="720" height="110" viewBox="1570 760 720 110"><defs><filter id="ash" x="-5%" y="-30%" width="110%" height="180%"><feGaussianBlur in="SourceAlpha" stdDeviation="1.9"/><feOffset dx="1.5" dy="3.5" result="o"/><feComponentTransfer><feFuncA type="linear" slope="0.62"/></feComponentTransfer><feMerge><feMergeNode/><feMergeNode in="SourceGraphic"/></feMerge></filter></defs><path filter="url(#ash)" fill="#fd574b" d="M1592.5 810.3 L1650.5 777 L1639 799.6 L2237.5 802.3 A10 10 0 0 1 2237.5 822.3 L1639 821.8 L1650.5 844.5 Z"/></svg>
<div style="left:1px;top:1501px;width:2878px;height:210px;background:#eeeeee;border:1px solid #d6d6d6;border-bottom-color:#b3b3b3;"></div>
<div style="left:4px;top:1504px;width:2872px;height:204px;background:#fff;"></div>
<div style="left:4px;top:1537px;width:2872px;height:1px;background:#e6e6e6;"></div>
<div style="left:3.5px;top:1510px;width:3px;height:22px;background:#e6e6e6;"></div>
<div style="left:362.5px;top:1510px;width:3px;height:22px;background:#e6e6e6;"></div>
<div style="left:482.5px;top:1510px;width:3px;height:22px;background:#e6e6e6;"></div>
<div style="left:842.5px;top:1510px;width:3px;height:22px;background:#e6e6e6;"></div>
<div style="left:1002.5px;top:1510px;width:3px;height:22px;background:#e6e6e6;"></div>
<div style="left:1122.5px;top:1510px;width:3px;height:22px;background:#e6e6e6;"></div>
<div style="left:1422.5px;top:1510px;width:3px;height:22px;background:#e6e6e6;"></div>
<div style="left:2873.5px;top:1510px;width:3px;height:22px;background:#e6e6e6;"></div>
<div class="t" style="left:12.10px;top:1512px;font-size:22px;line-height:22px;color:#000;letter-spacing:0.634px;">Server/Local file</div>
<div class="t" style="left:375.60px;top:1512px;font-size:22px;line-height:22px;color:#000;letter-spacing:1.078px;">Direction</div>
<div class="t" style="left:491.30px;top:1512px;font-size:22px;line-height:22px;color:#000;letter-spacing:0.721px;">Remote file</div>
<div class="t" style="left:952.20px;top:1512px;font-size:22px;line-height:22px;color:#000;letter-spacing:-0.040px;">Size</div>
<div class="t" style="left:1011.30px;top:1512px;font-size:22px;line-height:22px;color:#000;letter-spacing:0.828px;">Priority</div>
<div class="t" style="left:1131.70px;top:1512px;font-size:22px;line-height:22px;color:#000;letter-spacing:0.905px;">Status</div>
<div style="left:0px;top:1711px;width:2880px;height:4px;background:#f0f0f0;"></div>
<div style="left:0px;top:1715px;width:2880px;height:1px;background:#c9c9c9;"></div>
<div style="left:205px;top:1715px;width:2675px;height:1px;background:#b4b4b4;"></div>
<div style="left:0px;top:1716px;width:2880px;height:48px;background:linear-gradient(#d5d5d5,#dedede 25%,#e9e9e9 65%,#f4f4f4);"></div>
<div style="left:0px;top:1764px;width:2880px;height:1px;background:#c4c4c4;"></div>
<div style="left:0px;top:1765px;width:2880px;height:35px;background:#ececec;"></div>
<div style="left:205px;top:1716px;width:234px;height:42px;background:linear-gradient(#ebebeb 0 46%,#dfdfdf 46% 90%,#e4e4e4);border:1px solid #b2b2b2;border-bottom-color:#a9a9a9;border-top:0;border-radius:2px 2px 7px 7px;box-shadow:0 1px 0 rgba(255,255,255,.6), 0 1px 1px rgba(0,0,0,.12);"></div>
<div style="left:439px;top:1716px;width:300px;height:42px;background:linear-gradient(#ebebeb 0 46%,#dfdfdf 46% 90%,#e4e4e4);border:1px solid #b2b2b2;border-bottom-color:#a9a9a9;border-top:0;border-radius:2px 2px 7px 7px;box-shadow:0 1px 0 rgba(255,255,255,.6), 0 1px 1px rgba(0,0,0,.12);"></div>
<div style="left:10px;top:1716px;width:195px;height:42px;background:linear-gradient(#ffffff 0 55%,#f6f6f6 75%,#eaeaea);border:1px solid #b2b2b2;border-bottom-color:#a9a9a9;border-top:0;border-radius:2px 2px 7px 7px;box-shadow:0 1px 0 rgba(255,255,255,.6), 0 1px 1px rgba(0,0,0,.12);"></div>
<div class="t" style="left:26.53px;top:1722px;font-size:26px;line-height:26px;color:#000;letter-spacing:0.518px;font-weight:700;-webkit-text-stroke:0.25px #000;">Queued files</div>
<div class="t" style="left:220.87px;top:1722px;font-size:26px;line-height:26px;color:#000;letter-spacing:0.413px;">Failed transfers</div>
<div class="t" style="left:455.62px;top:1722px;font-size:26px;line-height:26px;color:#000;letter-spacing:0.607px;">Successful transfers</div>
<div class="t" style="left:2560.46px;top:1769px;font-size:22px;line-height:22px;color:#000;letter-spacing:0.672px;">Queue: empty</div>
<svg style="left:2400px;top:1760px;" width="480" height="40" viewBox="2400 1760 480 40"><path d="M2436.5 1781.500v-2.600a8.600 8.600 0 0 1 17.200 0v2.600" fill="none" stroke="#8b8b8b" stroke-width="3.800"/><rect x="2432" y="1781.500" width="29.600" height="17.600" rx="1.6" fill="#d9d9d9"/><rect x="2430.200" y="1779.800" width="29.700" height="17.700" rx="1.8" fill="#fec72e"/><circle cx="2445" cy="1786.300" r="2.700" fill="#7a6a50"/><path d="M2443.700 1787.500h2.600l.7 5.600h-4z" fill="#7a6a50"/><path d="M2482.28 1769.97 L2486.72 1769.97 L2487.11 1773.11 L2490.35 1774.45 L2492.85 1772.51 L2495.99 1775.65 L2494.05 1778.15 L2495.39 1781.39 L2498.53 1781.78 L2498.53 1786.22 L2495.39 1786.61 L2494.05 1789.85 L2495.99 1792.35 L2492.85 1795.49 L2490.35 1793.55 L2487.11 1794.89 L2486.72 1798.03 L2482.28 1798.03 L2481.89 1794.89 L2478.65 1793.55 L2476.15 1795.49 L2473.01 1792.35 L2474.95 1789.85 L2473.61 1786.61 L2470.47 1786.22 L2470.47 1781.78 L2473.61 1781.39 L2474.95 1778.15 L2473.01 1775.65 L2476.15 1772.51 L2478.65 1774.45 L2481.89 1773.11z" fill="#d8d8d8" stroke="#d8d8d8" stroke-width="1" stroke-linejoin="round"/><path d="M2481.08 1768.67 L2485.52 1768.67 L2485.91 1771.81 L2489.15 1773.15 L2491.65 1771.21 L2494.79 1774.35 L2492.85 1776.85 L2494.19 1780.09 L2497.33 1780.48 L2497.33 1784.92 L2494.19 1785.31 L2492.85 1788.55 L2494.79 1791.05 L2491.65 1794.19 L2489.15 1792.25 L2485.91 1793.59 L2485.52 1796.73 L2481.08 1796.73 L2480.69 1793.59 L2477.45 1792.25 L2474.95 1794.19 L2471.81 1791.05 L2473.75 1788.55 L2472.41 1785.31 L2469.27 1784.92 L2469.27 1780.48 L2472.41 1780.09 L2473.75 1776.85 L2471.81 1774.35 L2474.95 1771.21 L2477.45 1773.15 L2480.69 1771.81z" fill="#7b7b7b" stroke="#7b7b7b" stroke-width="1" stroke-linejoin="round"/><circle cx="2483.300" cy="1782.700" r="8.600" fill="#fff"/><text x="2483.300" y="1788.400" text-anchor="middle" font-family="Liberation Sans, sans-serif" font-weight="700" font-size="16" fill="#14d04a" stroke="#14d04a" stroke-width="0.6">A</text><circle cx="2522.200" cy="1784" r="14.300" fill="#d8d8d8"/><circle cx="2521" cy="1782.700" r="13.500" fill="#fff" stroke="#8d8d8d" stroke-width="2"/><path d="M2513.800 1790.200a10 10 0 1 1 14.400 0" fill="none" stroke="#8d8d8d" stroke-width="3.600"/><path d="M2520.600 1783.400l5.800-5.200" stroke="#7a7a7a" stroke-width="2" stroke-linecap="round"/><circle cx="2520.800" cy="1783.200" r="2.300" fill="#fff" stroke="#7a7a7a" stroke-width="1.500"/><defs><radialGradient id="lg" cx=".5" cy=".75" r=".6"><stop offset="0" stop-color="#3d7a50"/><stop offset=".5" stop-color="#3f4a43"/><stop offset="1" stop-color="#505050"/></radialGradient><radialGradient id="lr" cx=".5" cy=".3" r=".7"><stop offset="0" stop-color="#c98d85"/><stop offset=".45" stop-color="#9a4f47"/><stop offset="1" stop-color="#3a2b2a"/></radialGradient></defs><circle cx="2824.700" cy="1782.700" r="9.800" fill="#d0d0d0"/><circle cx="2824" cy="1781.700" r="9.500" fill="url(#lg)"/><path d="M2817.500 1778.500a7 7 0 0 1 13 0" fill="none" stroke="#8a8a8a" stroke-width="1.200" opacity=".8"/><circle cx="2854.700" cy="1782.700" r="9.800" fill="#d0d0d0"/><circle cx="2854" cy="1781.700" r="9.500" fill="url(#lr)"/></svg></div></body></html>
